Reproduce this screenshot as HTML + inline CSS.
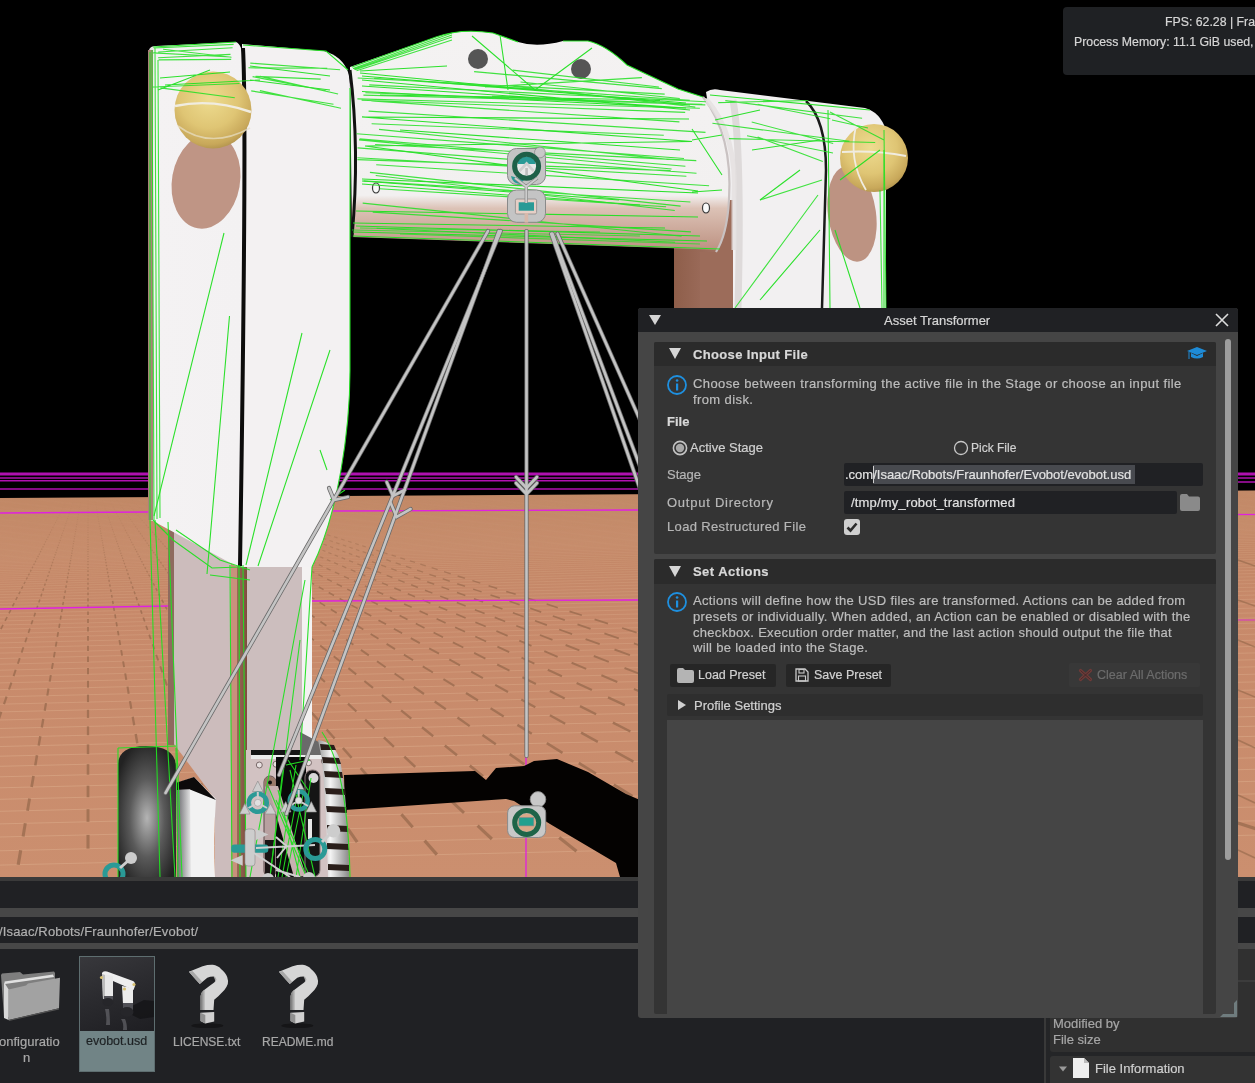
<!DOCTYPE html>
<html><head><meta charset="utf-8">
<style>
*{margin:0;padding:0;box-sizing:border-box}
html,body{width:1255px;height:1083px;overflow:hidden;background:#000;font-family:"Liberation Sans",sans-serif}
.a{position:absolute}
.t{position:absolute;white-space:nowrap;line-height:1;will-change:transform;-webkit-text-stroke-width:0.2px}
</style></head><body>
<svg class="a" style="left:0;top:0" width="1255" height="877" viewBox="0 0 1255 877">
<rect x="0" y="0" width="1255" height="877" fill="#000"/>
<defs><linearGradient id="floorG" gradientUnits="userSpaceOnUse" x1="0" y1="490" x2="0" y2="877"><stop offset="0" stop-color="#bf8563"/><stop offset="0.3" stop-color="#c7896a"/><stop offset="1" stop-color="#cb8f6f"/></linearGradient></defs><path d="M0 498 L1255 490.5 L1255 877 L0 877 Z" fill="url(#floorG)"/>
<!-- SCENE -->
<defs>
<linearGradient id="beamG" x1="0" y1="0" x2="0" y2="1">
 <stop offset="0" stop-color="#f4f2f2"/><stop offset="0.75" stop-color="#f2f0f0"/><stop offset="0.81" stop-color="#dcc2b6"/><stop offset="1" stop-color="#bd9282"/>
</linearGradient>
<linearGradient id="legL" x1="0" y1="0" x2="1" y2="0">
 <stop offset="0" stop-color="#d8d2d2"/><stop offset="0.06" stop-color="#f4f2f3"/><stop offset="1" stop-color="#f3f1f2"/>
</linearGradient>
<linearGradient id="brownG" x1="0" y1="0" x2="1" y2="0">
 <stop offset="0" stop-color="#8e5e4a"/><stop offset="0.7" stop-color="#a07060"/><stop offset="1" stop-color="#c8a898"/>
</linearGradient>
<radialGradient id="ballG" cx="0.45" cy="0.35" r="0.7">
 <stop offset="0" stop-color="#eedc90"/><stop offset="0.55" stop-color="#dfc574"/><stop offset="0.85" stop-color="#c8a85a"/><stop offset="1" stop-color="#a88a48"/>
</radialGradient>
<radialGradient id="wheelG" cx="0.5" cy="0.55" r="0.6">
 <stop offset="0" stop-color="#b4b4b4"/><stop offset="0.5" stop-color="#5a5a5a"/><stop offset="1" stop-color="#222"/>
</radialGradient>
<linearGradient id="lowG" x1="0" y1="0" x2="0" y2="1">
 <stop offset="0" stop-color="#c8bcbc"/><stop offset="1" stop-color="#cbbdbd"/>
</linearGradient>
<linearGradient id="grayL" x1="0" y1="0" x2="1" y2="0"><stop offset="0" stop-color="#6a6a6e"/><stop offset="1" stop-color="#e8e8e8"/></linearGradient>
<linearGradient id="trackG" x1="0" y1="0" x2="1" y2="0"><stop offset="0" stop-color="#9a9a9a"/><stop offset="0.4" stop-color="#f4f4f4"/><stop offset="1" stop-color="#8a8a8a"/></linearGradient>
<linearGradient id="brownV" x1="0" y1="0" x2="1" y2="0"><stop offset="0" stop-color="#9a6a58"/><stop offset="1" stop-color="#7a4a3a"/></linearGradient>
</defs>
<!-- floor grid texture -->
<clipPath id="floorClip"><path d="M0 498 L1255 490.5 L1255 877 L0 877 Z"/></clipPath>
<g stroke="#8c6246" stroke-width="1.2" opacity="0.6" fill="none" clip-path="url(#floorClip)">
<line x1="0" y1="499.2" x2="1255" y2="469.2" stroke="#e2b896" stroke-width="1" opacity="0.15"/>
<line x1="0" y1="500.4" x2="1255" y2="470.4" stroke="#e2b896" stroke-width="1" opacity="0.16"/>
<line x1="0" y1="501.6" x2="1255" y2="471.6" stroke="#e2b896" stroke-width="1" opacity="0.16"/>
<line x1="0" y1="502.8" x2="1255" y2="472.8" stroke="#e2b896" stroke-width="1" opacity="0.16"/>
<line x1="0" y1="504.0" x2="1255" y2="474.0" stroke="#e2b896" stroke-width="1" opacity="0.16"/>
<line x1="0" y1="505.2" x2="1255" y2="475.2" stroke="#e2b896" stroke-width="1" opacity="0.17"/>
<line x1="0" y1="506.4" x2="1255" y2="476.4" stroke="#e2b896" stroke-width="1" opacity="0.17"/>
<line x1="0" y1="507.6" x2="1255" y2="477.6" stroke="#e2b896" stroke-width="1" opacity="0.17"/>
<line x1="0" y1="508.8" x2="1255" y2="478.8" stroke="#e2b896" stroke-width="1" opacity="0.17"/>
<line x1="0" y1="510.0" x2="1255" y2="480.0" stroke="#e2b896" stroke-width="1" opacity="0.18"/>
<line x1="0" y1="511.2" x2="1255" y2="481.2" stroke="#e2b896" stroke-width="1" opacity="0.18"/>
<line x1="0" y1="512.4" x2="1255" y2="482.4" stroke="#e2b896" stroke-width="1" opacity="0.18"/>
<line x1="0" y1="513.6" x2="1255" y2="483.6" stroke="#e2b896" stroke-width="1" opacity="0.18"/>
<line x1="0" y1="514.8" x2="1255" y2="484.8" stroke="#e2b896" stroke-width="1" opacity="0.19"/>
<line x1="0" y1="516.0" x2="1255" y2="486.0" stroke="#e2b896" stroke-width="1" opacity="0.19"/>
<line x1="0" y1="517.2" x2="1255" y2="487.2" stroke="#e2b896" stroke-width="1" opacity="0.19"/>
<line x1="0" y1="518.4" x2="1255" y2="488.4" stroke="#e2b896" stroke-width="1" opacity="0.19"/>
<line x1="0" y1="519.6" x2="1255" y2="489.6" stroke="#e2b896" stroke-width="1" opacity="0.20"/>
<line x1="0" y1="520.8" x2="1255" y2="490.8" stroke="#e2b896" stroke-width="1" opacity="0.20"/>
<line x1="0" y1="522.0" x2="1255" y2="492.0" stroke="#e2b896" stroke-width="1" opacity="0.20"/>
<line x1="0" y1="523.2" x2="1255" y2="493.2" stroke="#e2b896" stroke-width="1" opacity="0.20"/>
<line x1="0" y1="524.4" x2="1255" y2="494.4" stroke="#e2b896" stroke-width="1" opacity="0.20"/>
<line x1="0" y1="525.6" x2="1255" y2="495.6" stroke="#e2b896" stroke-width="1" opacity="0.21"/>
<line x1="0" y1="526.8" x2="1255" y2="496.8" stroke="#e2b896" stroke-width="1" opacity="0.21"/>
<line x1="0" y1="528.0" x2="1255" y2="498.0" stroke="#e2b896" stroke-width="1" opacity="0.21"/>
<line x1="0" y1="529.2" x2="1255" y2="499.2" stroke="#e2b896" stroke-width="1" opacity="0.21"/>
<line x1="0" y1="530.4" x2="1255" y2="500.4" stroke="#e2b896" stroke-width="1" opacity="0.22"/>
<line x1="0" y1="531.6" x2="1255" y2="501.6" stroke="#e2b896" stroke-width="1" opacity="0.22"/>
<line x1="0" y1="532.8" x2="1255" y2="502.8" stroke="#e2b896" stroke-width="1" opacity="0.22"/>
<line x1="0" y1="534.0" x2="1255" y2="504.0" stroke="#e2b896" stroke-width="1" opacity="0.22"/>
<line x1="0" y1="535.2" x2="1255" y2="505.2" stroke="#e2b896" stroke-width="1" opacity="0.23"/>
<line x1="0" y1="536.4" x2="1255" y2="506.4" stroke="#e2b896" stroke-width="1" opacity="0.23"/>
<line x1="0" y1="537.6" x2="1255" y2="507.6" stroke="#e2b896" stroke-width="1" opacity="0.23"/>
<line x1="0" y1="538.8" x2="1255" y2="508.8" stroke="#e2b896" stroke-width="1" opacity="0.23"/>
<line x1="0" y1="540.0" x2="1255" y2="510.0" stroke="#e2b896" stroke-width="1" opacity="0.24"/>
<line x1="0" y1="541.2" x2="1255" y2="511.2" stroke="#e2b896" stroke-width="1" opacity="0.24"/>
<line x1="0" y1="542.4" x2="1255" y2="512.4" stroke="#e2b896" stroke-width="1" opacity="0.24"/>
<line x1="0" y1="543.6" x2="1255" y2="513.6" stroke="#e2b896" stroke-width="1" opacity="0.24"/>
<line x1="0" y1="544.8" x2="1255" y2="514.8" stroke="#e2b896" stroke-width="1" opacity="0.25"/>
<line x1="0" y1="546.0" x2="1255" y2="516.0" stroke="#e2b896" stroke-width="1" opacity="0.25"/>
<line x1="0" y1="547.2" x2="1255" y2="517.2" stroke="#e2b896" stroke-width="1" opacity="0.25"/>
<line x1="0" y1="548.4" x2="1255" y2="518.4" stroke="#e2b896" stroke-width="1" opacity="0.25"/>
<line x1="0" y1="549.6" x2="1255" y2="519.6" stroke="#e2b896" stroke-width="1" opacity="0.26"/>
<line x1="0" y1="550.8" x2="1255" y2="520.8" stroke="#e2b896" stroke-width="1" opacity="0.26"/>
<line x1="0" y1="552.0" x2="1255" y2="522.0" stroke="#e2b896" stroke-width="1" opacity="0.26"/>
<line x1="0" y1="553.2" x2="1255" y2="523.2" stroke="#e2b896" stroke-width="1" opacity="0.26"/>
<line x1="0" y1="554.4" x2="1255" y2="524.4" stroke="#e2b896" stroke-width="1" opacity="0.26"/>
<line x1="0" y1="555.6" x2="1255" y2="525.6" stroke="#e2b896" stroke-width="1" opacity="0.27"/>
<line x1="0" y1="556.8" x2="1255" y2="526.8" stroke="#e2b896" stroke-width="1" opacity="0.27"/>
<line x1="0" y1="558.0" x2="1255" y2="528.0" stroke="#e2b896" stroke-width="1" opacity="0.27"/>
<line x1="0" y1="559.2" x2="1255" y2="529.2" stroke="#e2b896" stroke-width="1" opacity="0.27"/>
<line x1="0" y1="560.4" x2="1255" y2="530.4" stroke="#e2b896" stroke-width="1" opacity="0.28"/>
<line x1="0" y1="561.7" x2="1255" y2="531.7" stroke="#e2b896" stroke-width="1" opacity="0.28"/>
<line x1="0" y1="563.0" x2="1255" y2="533.0" stroke="#e2b896" stroke-width="1" opacity="0.28"/>
<line x1="0" y1="564.4" x2="1255" y2="534.4" stroke="#e2b896" stroke-width="1" opacity="0.28"/>
<line x1="0" y1="565.9" x2="1255" y2="535.9" stroke="#e2b896" stroke-width="1" opacity="0.29"/>
<line x1="0" y1="567.4" x2="1255" y2="537.4" stroke="#e2b896" stroke-width="1" opacity="0.29"/>
<line x1="0" y1="569.0" x2="1255" y2="539.0" stroke="#e2b896" stroke-width="1" opacity="0.29"/>
<line x1="0" y1="570.6" x2="1255" y2="540.6" stroke="#e2b896" stroke-width="1" opacity="0.30"/>
<line x1="0" y1="572.4" x2="1255" y2="542.4" stroke="#e2b896" stroke-width="1" opacity="0.30"/>
<line x1="0" y1="574.2" x2="1255" y2="544.2" stroke="#e2b896" stroke-width="1" opacity="0.30"/>
<line x1="0" y1="576.1" x2="1255" y2="546.1" stroke="#e2b896" stroke-width="1" opacity="0.31"/>
<line x1="0" y1="578.1" x2="1255" y2="548.1" stroke="#e2b896" stroke-width="1" opacity="0.31"/>
<line x1="0" y1="580.1" x2="1255" y2="550.1" stroke="#e2b896" stroke-width="1" opacity="0.32"/>
<line x1="0" y1="582.3" x2="1255" y2="552.3" stroke="#e2b896" stroke-width="1" opacity="0.32"/>
<line x1="0" y1="584.5" x2="1255" y2="554.5" stroke="#e2b896" stroke-width="1" opacity="0.33"/>
<line x1="0" y1="586.9" x2="1255" y2="556.9" stroke="#e2b896" stroke-width="1" opacity="0.33"/>
<line x1="0" y1="589.4" x2="1255" y2="559.4" stroke="#e2b896" stroke-width="1" opacity="0.33"/>
<line x1="0" y1="591.9" x2="1255" y2="561.9" stroke="#e2b896" stroke-width="1" opacity="0.34"/>
<line x1="0" y1="594.6" x2="1255" y2="564.6" stroke="#e2b896" stroke-width="1" opacity="0.35"/>
<line x1="0" y1="597.4" x2="1255" y2="567.4" stroke="#e2b896" stroke-width="1" opacity="0.35"/>
<line x1="0" y1="600.4" x2="1255" y2="570.4" stroke="#e2b896" stroke-width="1" opacity="0.36"/>
<line x1="0" y1="603.5" x2="1255" y2="573.5" stroke="#e2b896" stroke-width="1" opacity="0.36"/>
<line x1="0" y1="606.7" x2="1255" y2="576.7" stroke="#e2b896" stroke-width="1" opacity="0.37"/>
<line x1="0" y1="610.0" x2="1255" y2="580.0" stroke="#e2b896" stroke-width="1" opacity="0.38"/>
<line x1="0" y1="613.5" x2="1255" y2="583.5" stroke="#e2b896" stroke-width="1" opacity="0.38"/>
<line x1="0" y1="617.2" x2="1255" y2="587.2" stroke="#e2b896" stroke-width="1" opacity="0.39"/>
<line x1="0" y1="621.0" x2="1255" y2="591.0" stroke="#e2b896" stroke-width="1" opacity="0.40"/>
<line x1="0" y1="625.0" x2="1255" y2="595.0" stroke="#e2b896" stroke-width="1" opacity="0.41"/>
<line x1="0" y1="629.2" x2="1255" y2="599.2" stroke="#e2b896" stroke-width="1" opacity="0.41"/>
<line x1="0" y1="633.6" x2="1255" y2="603.6" stroke="#e2b896" stroke-width="1" opacity="0.42"/>
<line x1="0" y1="638.1" x2="1255" y2="608.1" stroke="#e2b896" stroke-width="1" opacity="0.43"/>
<line x1="0" y1="642.9" x2="1255" y2="612.9" stroke="#e2b896" stroke-width="1" opacity="0.44"/>
<line x1="0" y1="647.9" x2="1255" y2="617.9" stroke="#e2b896" stroke-width="1" opacity="0.45"/>
<line x1="0" y1="653.1" x2="1255" y2="623.1" stroke="#e2b896" stroke-width="1" opacity="0.46"/>
<line x1="0" y1="658.5" x2="1255" y2="628.5" stroke="#e2b896" stroke-width="1" opacity="0.47"/>
<line x1="0" y1="664.2" x2="1255" y2="634.2" stroke="#e2b896" stroke-width="1" opacity="0.48"/>
<line x1="0" y1="670.2" x2="1255" y2="640.2" stroke="#e2b896" stroke-width="1" opacity="0.50"/>
<line x1="0" y1="676.4" x2="1255" y2="646.4" stroke="#e2b896" stroke-width="1" opacity="0.51"/>
<line x1="0" y1="682.9" x2="1255" y2="652.9" stroke="#e2b896" stroke-width="1" opacity="0.52"/>
<line x1="0" y1="689.7" x2="1255" y2="659.7" stroke="#e2b896" stroke-width="1" opacity="0.54"/>
<line x1="0" y1="696.8" x2="1255" y2="666.8" stroke="#e2b896" stroke-width="1" opacity="0.55"/>
<line x1="0" y1="704.2" x2="1255" y2="674.2" stroke="#e2b896" stroke-width="1" opacity="0.56"/>
<line x1="0" y1="711.9" x2="1255" y2="681.9" stroke="#e2b896" stroke-width="1" opacity="0.58"/>
<line x1="0" y1="720.0" x2="1255" y2="690.0" stroke="#e2b896" stroke-width="1" opacity="0.60"/>
<line x1="0" y1="728.5" x2="1255" y2="698.5" stroke="#e2b896" stroke-width="1" opacity="0.61"/>
<line x1="0" y1="737.3" x2="1255" y2="707.3" stroke="#e2b896" stroke-width="1" opacity="0.63"/>
<line x1="0" y1="746.5" x2="1255" y2="716.5" stroke="#e2b896" stroke-width="1" opacity="0.65"/>
<line x1="0" y1="756.2" x2="1255" y2="726.2" stroke="#e2b896" stroke-width="1" opacity="0.65"/>
<line x1="0" y1="766.3" x2="1255" y2="736.3" stroke="#e2b896" stroke-width="1" opacity="0.65"/>
<line x1="0" y1="776.8" x2="1255" y2="746.8" stroke="#e2b896" stroke-width="1" opacity="0.65"/>
<line x1="0" y1="787.8" x2="1255" y2="757.8" stroke="#e2b896" stroke-width="1" opacity="0.65"/>
<line x1="0" y1="799.3" x2="1255" y2="769.3" stroke="#e2b896" stroke-width="1" opacity="0.65"/>
<line x1="0" y1="811.3" x2="1255" y2="781.3" stroke="#e2b896" stroke-width="1" opacity="0.65"/>
<line x1="0" y1="823.9" x2="1255" y2="793.9" stroke="#e2b896" stroke-width="1" opacity="0.65"/>
<line x1="0" y1="837.0" x2="1255" y2="807.0" stroke="#e2b896" stroke-width="1" opacity="0.65"/>
<line x1="0" y1="850.8" x2="1255" y2="820.8" stroke="#e2b896" stroke-width="1" opacity="0.65"/>
<line x1="0" y1="865.1" x2="1255" y2="835.1" stroke="#e2b896" stroke-width="1" opacity="0.65"/>
<line x1="65.7" y1="502.4" x2="65.1" y2="503.6" stroke-width="0.85" stroke-opacity="0.06"/>
<line x1="64.5" y1="504.9" x2="63.9" y2="506.1" stroke-width="0.86" stroke-opacity="0.09"/>
<line x1="63.2" y1="507.3" x2="62.6" y2="508.5" stroke-width="0.88" stroke-opacity="0.11"/>
<line x1="62.0" y1="509.7" x2="61.4" y2="510.9" stroke-width="0.90" stroke-opacity="0.13"/>
<line x1="60.7" y1="512.1" x2="60.1" y2="513.4" stroke-width="0.91" stroke-opacity="0.15"/>
<line x1="59.5" y1="514.6" x2="58.9" y2="515.8" stroke-width="0.93" stroke-opacity="0.17"/>
<line x1="58.3" y1="517.0" x2="57.6" y2="518.2" stroke-width="0.95" stroke-opacity="0.19"/>
<line x1="57.0" y1="519.4" x2="56.4" y2="520.7" stroke-width="0.96" stroke-opacity="0.22"/>
<line x1="55.8" y1="521.9" x2="55.2" y2="523.1" stroke-width="0.98" stroke-opacity="0.24"/>
<line x1="54.5" y1="524.3" x2="53.9" y2="525.5" stroke-width="1.00" stroke-opacity="0.26"/>
<line x1="53.3" y1="526.7" x2="52.7" y2="527.9" stroke-width="1.01" stroke-opacity="0.28"/>
<line x1="52.0" y1="529.2" x2="51.4" y2="530.4" stroke-width="1.03" stroke-opacity="0.30"/>
<line x1="50.8" y1="531.6" x2="50.2" y2="532.8" stroke-width="1.04" stroke-opacity="0.33"/>
<line x1="49.6" y1="534.0" x2="48.9" y2="535.2" stroke-width="1.06" stroke-opacity="0.35"/>
<line x1="48.3" y1="536.4" x2="47.7" y2="537.7" stroke-width="1.08" stroke-opacity="0.37"/>
<line x1="47.1" y1="538.9" x2="46.4" y2="540.1" stroke-width="1.09" stroke-opacity="0.39"/>
<line x1="45.8" y1="541.3" x2="45.2" y2="542.5" stroke-width="1.11" stroke-opacity="0.41"/>
<line x1="44.6" y1="543.7" x2="44.0" y2="544.9" stroke-width="1.13" stroke-opacity="0.43"/>
<line x1="43.3" y1="546.2" x2="42.7" y2="547.4" stroke-width="1.14" stroke-opacity="0.46"/>
<line x1="42.1" y1="548.6" x2="41.5" y2="549.8" stroke-width="1.16" stroke-opacity="0.48"/>
<line x1="40.9" y1="551.0" x2="40.2" y2="552.2" stroke-width="1.18" stroke-opacity="0.50"/>
<line x1="39.6" y1="553.5" x2="39.0" y2="554.7" stroke-width="1.19" stroke-opacity="0.52"/>
<line x1="38.4" y1="555.9" x2="37.7" y2="557.1" stroke-width="1.21" stroke-opacity="0.54"/>
<line x1="37.1" y1="558.3" x2="36.5" y2="559.5" stroke-width="1.23" stroke-opacity="0.57"/>
<line x1="35.8" y1="560.8" x2="35.1" y2="562.2" stroke-width="1.24" stroke-opacity="0.59"/>
<line x1="34.4" y1="563.6" x2="33.7" y2="565.1" stroke-width="1.26" stroke-opacity="0.61"/>
<line x1="32.9" y1="566.6" x2="32.1" y2="568.2" stroke-width="1.28" stroke-opacity="0.64"/>
<line x1="31.2" y1="569.9" x2="30.3" y2="571.6" stroke-width="1.30" stroke-opacity="0.67"/>
<line x1="29.4" y1="573.5" x2="28.4" y2="575.4" stroke-width="1.33" stroke-opacity="0.70"/>
<line x1="27.4" y1="577.4" x2="26.3" y2="579.5" stroke-width="1.35" stroke-opacity="0.74"/>
<line x1="25.2" y1="581.7" x2="24.0" y2="584.0" stroke-width="1.38" stroke-opacity="0.78"/>
<line x1="22.8" y1="586.4" x2="21.5" y2="588.8" stroke-width="1.42" stroke-opacity="0.82"/>
<line x1="20.2" y1="591.5" x2="18.8" y2="594.2" stroke-width="1.45" stroke-opacity="0.86"/>
<line x1="17.3" y1="597.0" x2="15.8" y2="600.0" stroke-width="1.49" stroke-opacity="0.91"/>
<line x1="14.2" y1="603.1" x2="12.5" y2="606.4" stroke-width="1.53" stroke-opacity="0.97"/>
<line x1="10.8" y1="609.8" x2="9.0" y2="613.3" stroke-width="1.57" stroke-opacity="1.00"/>
<line x1="7.1" y1="617.0" x2="5.1" y2="620.9" stroke-width="1.62" stroke-opacity="1.00"/>
<line x1="3.0" y1="624.9" x2="0.9" y2="629.2" stroke-width="1.68" stroke-opacity="1.00"/>
<line x1="73.6" y1="501.0" x2="73.1" y2="502.3" stroke-width="0.84" stroke-opacity="0.05"/>
<line x1="72.7" y1="503.5" x2="72.3" y2="504.7" stroke-width="0.86" stroke-opacity="0.07"/>
<line x1="71.9" y1="505.9" x2="71.5" y2="507.1" stroke-width="0.87" stroke-opacity="0.10"/>
<line x1="71.1" y1="508.3" x2="70.7" y2="509.5" stroke-width="0.89" stroke-opacity="0.12"/>
<line x1="70.2" y1="510.7" x2="69.8" y2="511.9" stroke-width="0.91" stroke-opacity="0.14"/>
<line x1="69.4" y1="513.1" x2="69.0" y2="514.4" stroke-width="0.92" stroke-opacity="0.16"/>
<line x1="68.6" y1="515.6" x2="68.2" y2="516.8" stroke-width="0.94" stroke-opacity="0.18"/>
<line x1="67.8" y1="518.0" x2="67.3" y2="519.2" stroke-width="0.95" stroke-opacity="0.21"/>
<line x1="66.9" y1="520.4" x2="66.5" y2="521.6" stroke-width="0.97" stroke-opacity="0.23"/>
<line x1="66.1" y1="522.8" x2="65.7" y2="524.0" stroke-width="0.99" stroke-opacity="0.25"/>
<line x1="65.3" y1="525.2" x2="64.9" y2="526.4" stroke-width="1.00" stroke-opacity="0.27"/>
<line x1="64.4" y1="527.7" x2="64.0" y2="528.9" stroke-width="1.02" stroke-opacity="0.29"/>
<line x1="63.6" y1="530.1" x2="63.2" y2="531.3" stroke-width="1.04" stroke-opacity="0.31"/>
<line x1="62.8" y1="532.5" x2="62.4" y2="533.7" stroke-width="1.05" stroke-opacity="0.34"/>
<line x1="62.0" y1="534.9" x2="61.5" y2="536.1" stroke-width="1.07" stroke-opacity="0.36"/>
<line x1="61.1" y1="537.3" x2="60.7" y2="538.5" stroke-width="1.09" stroke-opacity="0.38"/>
<line x1="60.3" y1="539.8" x2="59.9" y2="541.0" stroke-width="1.10" stroke-opacity="0.40"/>
<line x1="59.5" y1="542.2" x2="59.1" y2="543.4" stroke-width="1.12" stroke-opacity="0.42"/>
<line x1="58.6" y1="544.6" x2="58.2" y2="545.8" stroke-width="1.14" stroke-opacity="0.45"/>
<line x1="57.8" y1="547.0" x2="57.4" y2="548.2" stroke-width="1.15" stroke-opacity="0.47"/>
<line x1="57.0" y1="549.4" x2="56.6" y2="550.6" stroke-width="1.17" stroke-opacity="0.49"/>
<line x1="56.2" y1="551.9" x2="55.7" y2="553.1" stroke-width="1.18" stroke-opacity="0.51"/>
<line x1="55.3" y1="554.3" x2="54.9" y2="555.5" stroke-width="1.20" stroke-opacity="0.53"/>
<line x1="54.5" y1="556.7" x2="54.1" y2="557.9" stroke-width="1.22" stroke-opacity="0.55"/>
<line x1="53.7" y1="559.1" x2="53.2" y2="560.4" stroke-width="1.23" stroke-opacity="0.58"/>
<line x1="52.8" y1="561.8" x2="52.3" y2="563.2" stroke-width="1.25" stroke-opacity="0.60"/>
<line x1="51.8" y1="564.6" x2="51.3" y2="566.2" stroke-width="1.27" stroke-opacity="0.63"/>
<line x1="50.7" y1="567.8" x2="50.1" y2="569.4" stroke-width="1.29" stroke-opacity="0.65"/>
<line x1="49.5" y1="571.2" x2="48.9" y2="573.0" stroke-width="1.32" stroke-opacity="0.69"/>
<line x1="48.3" y1="574.9" x2="47.6" y2="576.9" stroke-width="1.34" stroke-opacity="0.72"/>
<line x1="46.9" y1="579.0" x2="46.1" y2="581.2" stroke-width="1.37" stroke-opacity="0.76"/>
<line x1="45.3" y1="583.5" x2="44.5" y2="585.8" stroke-width="1.40" stroke-opacity="0.80"/>
<line x1="43.7" y1="588.3" x2="42.8" y2="590.9" stroke-width="1.43" stroke-opacity="0.84"/>
<line x1="41.8" y1="593.6" x2="40.9" y2="596.5" stroke-width="1.47" stroke-opacity="0.89"/>
<line x1="39.9" y1="599.4" x2="38.8" y2="602.5" stroke-width="1.51" stroke-opacity="0.94"/>
<line x1="37.7" y1="605.8" x2="36.5" y2="609.1" stroke-width="1.55" stroke-opacity="1.00"/>
<line x1="35.3" y1="612.7" x2="34.1" y2="616.4" stroke-width="1.60" stroke-opacity="1.00"/>
<line x1="32.7" y1="620.2" x2="31.3" y2="624.3" stroke-width="1.65" stroke-opacity="1.00"/>
<line x1="29.9" y1="628.5" x2="28.4" y2="632.9" stroke-width="1.70" stroke-opacity="1.00"/>
<line x1="26.8" y1="637.5" x2="25.2" y2="642.3" stroke-width="1.77" stroke-opacity="1.00"/>
<line x1="23.4" y1="647.3" x2="21.6" y2="652.6" stroke-width="1.83" stroke-opacity="1.00"/>
<line x1="19.8" y1="658.1" x2="17.8" y2="663.8" stroke-width="1.91" stroke-opacity="1.00"/>
<line x1="15.7" y1="669.8" x2="13.6" y2="676.1" stroke-width="1.98" stroke-opacity="1.00"/>
<line x1="11.4" y1="682.6" x2="9.0" y2="689.5" stroke-width="2.07" stroke-opacity="1.00"/>
<line x1="6.6" y1="696.6" x2="4.0" y2="704.1" stroke-width="2.17" stroke-opacity="1.00"/>
<line x1="1.3" y1="711.9" x2="-1.5" y2="720.0" stroke-width="2.27" stroke-opacity="1.00"/>
<line x1="80.6" y1="502.1" x2="80.4" y2="503.3" stroke-width="0.85" stroke-opacity="0.06"/>
<line x1="80.2" y1="504.5" x2="80.0" y2="505.7" stroke-width="0.86" stroke-opacity="0.09"/>
<line x1="79.7" y1="506.9" x2="79.5" y2="508.1" stroke-width="0.88" stroke-opacity="0.11"/>
<line x1="79.3" y1="509.3" x2="79.1" y2="510.5" stroke-width="0.90" stroke-opacity="0.13"/>
<line x1="78.9" y1="511.7" x2="78.7" y2="512.9" stroke-width="0.91" stroke-opacity="0.15"/>
<line x1="78.5" y1="514.1" x2="78.3" y2="515.3" stroke-width="0.93" stroke-opacity="0.17"/>
<line x1="78.1" y1="516.5" x2="77.9" y2="517.7" stroke-width="0.95" stroke-opacity="0.19"/>
<line x1="77.7" y1="518.9" x2="77.5" y2="520.1" stroke-width="0.96" stroke-opacity="0.22"/>
<line x1="77.3" y1="521.4" x2="77.1" y2="522.6" stroke-width="0.98" stroke-opacity="0.24"/>
<line x1="76.8" y1="523.8" x2="76.6" y2="525.0" stroke-width="1.00" stroke-opacity="0.26"/>
<line x1="76.4" y1="526.2" x2="76.2" y2="527.4" stroke-width="1.01" stroke-opacity="0.28"/>
<line x1="76.0" y1="528.6" x2="75.8" y2="529.8" stroke-width="1.03" stroke-opacity="0.30"/>
<line x1="75.6" y1="531.0" x2="75.4" y2="532.2" stroke-width="1.04" stroke-opacity="0.33"/>
<line x1="75.2" y1="533.4" x2="75.0" y2="534.6" stroke-width="1.06" stroke-opacity="0.35"/>
<line x1="74.8" y1="535.8" x2="74.6" y2="537.0" stroke-width="1.08" stroke-opacity="0.37"/>
<line x1="74.4" y1="538.2" x2="74.1" y2="539.4" stroke-width="1.09" stroke-opacity="0.39"/>
<line x1="73.9" y1="540.6" x2="73.7" y2="541.8" stroke-width="1.11" stroke-opacity="0.41"/>
<line x1="73.5" y1="543.0" x2="73.3" y2="544.2" stroke-width="1.13" stroke-opacity="0.43"/>
<line x1="73.1" y1="545.5" x2="72.9" y2="546.7" stroke-width="1.14" stroke-opacity="0.46"/>
<line x1="72.7" y1="547.9" x2="72.5" y2="549.1" stroke-width="1.16" stroke-opacity="0.48"/>
<line x1="72.3" y1="550.3" x2="72.1" y2="551.5" stroke-width="1.18" stroke-opacity="0.50"/>
<line x1="71.9" y1="552.7" x2="71.7" y2="553.9" stroke-width="1.19" stroke-opacity="0.52"/>
<line x1="71.5" y1="555.1" x2="71.2" y2="556.3" stroke-width="1.21" stroke-opacity="0.54"/>
<line x1="71.0" y1="557.5" x2="70.8" y2="558.7" stroke-width="1.23" stroke-opacity="0.57"/>
<line x1="70.6" y1="560.0" x2="70.4" y2="561.3" stroke-width="1.24" stroke-opacity="0.59"/>
<line x1="70.1" y1="562.7" x2="69.9" y2="564.2" stroke-width="1.26" stroke-opacity="0.61"/>
<line x1="69.6" y1="565.7" x2="69.4" y2="567.3" stroke-width="1.28" stroke-opacity="0.64"/>
<line x1="69.1" y1="569.0" x2="68.8" y2="570.7" stroke-width="1.30" stroke-opacity="0.67"/>
<line x1="68.5" y1="572.5" x2="68.1" y2="574.4" stroke-width="1.33" stroke-opacity="0.70"/>
<line x1="67.8" y1="576.4" x2="67.4" y2="578.5" stroke-width="1.35" stroke-opacity="0.74"/>
<line x1="67.1" y1="580.7" x2="66.7" y2="582.9" stroke-width="1.38" stroke-opacity="0.78"/>
<line x1="66.3" y1="585.3" x2="65.8" y2="587.8" stroke-width="1.42" stroke-opacity="0.82"/>
<line x1="65.4" y1="590.4" x2="64.9" y2="593.1" stroke-width="1.45" stroke-opacity="0.86"/>
<line x1="64.4" y1="595.9" x2="63.9" y2="598.9" stroke-width="1.49" stroke-opacity="0.91"/>
<line x1="63.4" y1="601.9" x2="62.8" y2="605.2" stroke-width="1.53" stroke-opacity="0.97"/>
<line x1="62.3" y1="608.5" x2="61.7" y2="612.1" stroke-width="1.57" stroke-opacity="1.00"/>
<line x1="61.0" y1="615.7" x2="60.4" y2="619.6" stroke-width="1.62" stroke-opacity="1.00"/>
<line x1="59.7" y1="623.6" x2="59.0" y2="627.8" stroke-width="1.68" stroke-opacity="1.00"/>
<line x1="58.2" y1="632.2" x2="57.4" y2="636.8" stroke-width="1.73" stroke-opacity="1.00"/>
<line x1="56.6" y1="641.6" x2="55.7" y2="646.6" stroke-width="1.80" stroke-opacity="1.00"/>
<line x1="54.8" y1="651.8" x2="53.9" y2="657.3" stroke-width="1.87" stroke-opacity="1.00"/>
<line x1="52.9" y1="663.0" x2="51.9" y2="668.9" stroke-width="1.94" stroke-opacity="1.00"/>
<line x1="50.8" y1="675.2" x2="49.7" y2="681.7" stroke-width="2.03" stroke-opacity="1.00"/>
<line x1="48.5" y1="688.5" x2="47.3" y2="695.6" stroke-width="2.12" stroke-opacity="1.00"/>
<line x1="46.0" y1="703.1" x2="44.7" y2="710.8" stroke-width="2.22" stroke-opacity="1.00"/>
<line x1="43.3" y1="719.0" x2="41.8" y2="727.5" stroke-width="2.33" stroke-opacity="1.00"/>
<line x1="40.3" y1="736.3" x2="38.7" y2="745.6" stroke-width="2.44" stroke-opacity="1.00"/>
<line x1="37.0" y1="755.3" x2="35.3" y2="765.4" stroke-width="2.57" stroke-opacity="1.00"/>
<line x1="33.5" y1="776.0" x2="31.6" y2="787.1" stroke-width="2.71" stroke-opacity="1.00"/>
<line x1="29.6" y1="798.6" x2="27.5" y2="810.7" stroke-width="2.87" stroke-opacity="1.00"/>
<line x1="25.3" y1="823.3" x2="23.1" y2="836.5" stroke-width="3.04" stroke-opacity="1.00"/>
<line x1="20.7" y1="850.3" x2="18.2" y2="864.7" stroke-width="3.22" stroke-opacity="1.00"/>
<line x1="88.0" y1="500.7" x2="88.0" y2="501.9" stroke-width="0.84" stroke-opacity="0.05"/>
<line x1="88.0" y1="503.1" x2="88.0" y2="504.3" stroke-width="0.86" stroke-opacity="0.07"/>
<line x1="88.0" y1="505.5" x2="88.0" y2="506.7" stroke-width="0.87" stroke-opacity="0.10"/>
<line x1="88.0" y1="507.9" x2="88.0" y2="509.1" stroke-width="0.89" stroke-opacity="0.12"/>
<line x1="88.0" y1="510.3" x2="88.0" y2="511.5" stroke-width="0.91" stroke-opacity="0.14"/>
<line x1="88.0" y1="512.7" x2="88.0" y2="513.9" stroke-width="0.92" stroke-opacity="0.16"/>
<line x1="88.0" y1="515.1" x2="88.0" y2="516.3" stroke-width="0.94" stroke-opacity="0.18"/>
<line x1="88.0" y1="517.5" x2="88.0" y2="518.7" stroke-width="0.95" stroke-opacity="0.21"/>
<line x1="88.0" y1="519.9" x2="88.0" y2="521.1" stroke-width="0.97" stroke-opacity="0.23"/>
<line x1="88.0" y1="522.3" x2="88.0" y2="523.5" stroke-width="0.99" stroke-opacity="0.25"/>
<line x1="88.0" y1="524.7" x2="88.0" y2="525.9" stroke-width="1.00" stroke-opacity="0.27"/>
<line x1="88.0" y1="527.1" x2="88.0" y2="528.3" stroke-width="1.02" stroke-opacity="0.29"/>
<line x1="88.0" y1="529.5" x2="88.0" y2="530.7" stroke-width="1.04" stroke-opacity="0.31"/>
<line x1="88.0" y1="531.9" x2="88.0" y2="533.1" stroke-width="1.05" stroke-opacity="0.34"/>
<line x1="88.0" y1="534.3" x2="88.0" y2="535.5" stroke-width="1.07" stroke-opacity="0.36"/>
<line x1="88.0" y1="536.7" x2="88.0" y2="537.9" stroke-width="1.09" stroke-opacity="0.38"/>
<line x1="88.0" y1="539.1" x2="88.0" y2="540.3" stroke-width="1.10" stroke-opacity="0.40"/>
<line x1="88.0" y1="541.5" x2="88.0" y2="542.7" stroke-width="1.12" stroke-opacity="0.42"/>
<line x1="88.0" y1="543.9" x2="88.0" y2="545.1" stroke-width="1.14" stroke-opacity="0.45"/>
<line x1="88.0" y1="546.3" x2="88.0" y2="547.5" stroke-width="1.15" stroke-opacity="0.47"/>
<line x1="88.0" y1="548.7" x2="88.0" y2="549.9" stroke-width="1.17" stroke-opacity="0.49"/>
<line x1="88.0" y1="551.1" x2="88.0" y2="552.3" stroke-width="1.18" stroke-opacity="0.51"/>
<line x1="88.0" y1="553.5" x2="88.0" y2="554.7" stroke-width="1.20" stroke-opacity="0.53"/>
<line x1="88.0" y1="555.9" x2="88.0" y2="557.1" stroke-width="1.22" stroke-opacity="0.55"/>
<line x1="88.0" y1="558.3" x2="88.0" y2="559.6" stroke-width="1.23" stroke-opacity="0.58"/>
<line x1="88.0" y1="560.9" x2="88.0" y2="562.3" stroke-width="1.25" stroke-opacity="0.60"/>
<line x1="88.0" y1="563.8" x2="88.0" y2="565.3" stroke-width="1.27" stroke-opacity="0.63"/>
<line x1="88.0" y1="566.9" x2="88.0" y2="568.5" stroke-width="1.29" stroke-opacity="0.65"/>
<line x1="88.0" y1="570.3" x2="88.0" y2="572.1" stroke-width="1.32" stroke-opacity="0.69"/>
<line x1="88.0" y1="574.0" x2="88.0" y2="575.9" stroke-width="1.34" stroke-opacity="0.72"/>
<line x1="88.0" y1="578.0" x2="88.0" y2="580.2" stroke-width="1.37" stroke-opacity="0.76"/>
<line x1="88.0" y1="582.4" x2="88.0" y2="584.8" stroke-width="1.40" stroke-opacity="0.80"/>
<line x1="88.0" y1="587.3" x2="88.0" y2="589.8" stroke-width="1.43" stroke-opacity="0.84"/>
<line x1="88.0" y1="592.5" x2="88.0" y2="595.3" stroke-width="1.47" stroke-opacity="0.89"/>
<line x1="88.0" y1="598.3" x2="88.0" y2="601.4" stroke-width="1.51" stroke-opacity="0.94"/>
<line x1="88.0" y1="604.6" x2="88.0" y2="607.9" stroke-width="1.55" stroke-opacity="1.00"/>
<line x1="88.0" y1="611.4" x2="88.0" y2="615.1" stroke-width="1.60" stroke-opacity="1.00"/>
<line x1="88.0" y1="618.9" x2="88.0" y2="622.9" stroke-width="1.65" stroke-opacity="1.00"/>
<line x1="88.0" y1="627.1" x2="88.0" y2="631.5" stroke-width="1.70" stroke-opacity="1.00"/>
<line x1="88.0" y1="636.0" x2="88.0" y2="640.8" stroke-width="1.77" stroke-opacity="1.00"/>
<line x1="88.0" y1="645.8" x2="88.0" y2="651.0" stroke-width="1.83" stroke-opacity="1.00"/>
<line x1="88.0" y1="656.4" x2="88.0" y2="662.1" stroke-width="1.91" stroke-opacity="1.00"/>
<line x1="88.0" y1="668.1" x2="88.0" y2="674.3" stroke-width="1.98" stroke-opacity="1.00"/>
<line x1="88.0" y1="680.8" x2="88.0" y2="687.6" stroke-width="2.07" stroke-opacity="1.00"/>
<line x1="88.0" y1="694.7" x2="88.0" y2="702.1" stroke-width="2.17" stroke-opacity="1.00"/>
<line x1="88.0" y1="709.8" x2="88.0" y2="717.9" stroke-width="2.27" stroke-opacity="1.00"/>
<line x1="88.0" y1="726.4" x2="88.0" y2="735.2" stroke-width="2.38" stroke-opacity="1.00"/>
<line x1="88.0" y1="744.4" x2="88.0" y2="754.1" stroke-width="2.51" stroke-opacity="1.00"/>
<line x1="88.0" y1="764.2" x2="88.0" y2="774.7" stroke-width="2.64" stroke-opacity="1.00"/>
<line x1="88.0" y1="785.7" x2="88.0" y2="797.2" stroke-width="2.79" stroke-opacity="1.00"/>
<line x1="88.0" y1="809.2" x2="88.0" y2="821.8" stroke-width="2.95" stroke-opacity="1.00"/>
<line x1="88.0" y1="834.9" x2="88.0" y2="848.6" stroke-width="3.13" stroke-opacity="1.00"/>
<line x1="95.4" y1="501.7" x2="95.6" y2="502.9" stroke-width="0.85" stroke-opacity="0.06"/>
<line x1="95.8" y1="504.1" x2="96.0" y2="505.3" stroke-width="0.86" stroke-opacity="0.09"/>
<line x1="96.3" y1="506.5" x2="96.5" y2="507.7" stroke-width="0.88" stroke-opacity="0.11"/>
<line x1="96.7" y1="508.9" x2="96.9" y2="510.1" stroke-width="0.90" stroke-opacity="0.13"/>
<line x1="97.1" y1="511.3" x2="97.3" y2="512.5" stroke-width="0.91" stroke-opacity="0.15"/>
<line x1="97.5" y1="513.7" x2="97.7" y2="514.9" stroke-width="0.93" stroke-opacity="0.17"/>
<line x1="97.9" y1="516.1" x2="98.1" y2="517.3" stroke-width="0.95" stroke-opacity="0.19"/>
<line x1="98.3" y1="518.4" x2="98.5" y2="519.6" stroke-width="0.96" stroke-opacity="0.22"/>
<line x1="98.7" y1="520.8" x2="98.9" y2="522.0" stroke-width="0.98" stroke-opacity="0.24"/>
<line x1="99.2" y1="523.2" x2="99.4" y2="524.4" stroke-width="1.00" stroke-opacity="0.26"/>
<line x1="99.6" y1="525.6" x2="99.8" y2="526.8" stroke-width="1.01" stroke-opacity="0.28"/>
<line x1="100.0" y1="528.0" x2="100.2" y2="529.2" stroke-width="1.03" stroke-opacity="0.30"/>
<line x1="100.4" y1="530.4" x2="100.6" y2="531.6" stroke-width="1.04" stroke-opacity="0.33"/>
<line x1="100.8" y1="532.8" x2="101.0" y2="534.0" stroke-width="1.06" stroke-opacity="0.35"/>
<line x1="101.2" y1="535.2" x2="101.4" y2="536.4" stroke-width="1.08" stroke-opacity="0.37"/>
<line x1="101.6" y1="537.6" x2="101.9" y2="538.8" stroke-width="1.09" stroke-opacity="0.39"/>
<line x1="102.1" y1="540.0" x2="102.3" y2="541.2" stroke-width="1.11" stroke-opacity="0.41"/>
<line x1="102.5" y1="542.4" x2="102.7" y2="543.5" stroke-width="1.13" stroke-opacity="0.43"/>
<line x1="102.9" y1="544.7" x2="103.1" y2="545.9" stroke-width="1.14" stroke-opacity="0.46"/>
<line x1="103.3" y1="547.1" x2="103.5" y2="548.3" stroke-width="1.16" stroke-opacity="0.48"/>
<line x1="103.7" y1="549.5" x2="103.9" y2="550.7" stroke-width="1.18" stroke-opacity="0.50"/>
<line x1="104.1" y1="551.9" x2="104.3" y2="553.1" stroke-width="1.19" stroke-opacity="0.52"/>
<line x1="104.5" y1="554.3" x2="104.8" y2="555.5" stroke-width="1.21" stroke-opacity="0.54"/>
<line x1="105.0" y1="556.7" x2="105.2" y2="557.9" stroke-width="1.23" stroke-opacity="0.57"/>
<line x1="105.4" y1="559.2" x2="105.6" y2="560.5" stroke-width="1.24" stroke-opacity="0.59"/>
<line x1="105.9" y1="561.9" x2="106.1" y2="563.3" stroke-width="1.26" stroke-opacity="0.61"/>
<line x1="106.4" y1="564.8" x2="106.6" y2="566.4" stroke-width="1.28" stroke-opacity="0.64"/>
<line x1="106.9" y1="568.1" x2="107.2" y2="569.8" stroke-width="1.30" stroke-opacity="0.67"/>
<line x1="107.5" y1="571.6" x2="107.9" y2="573.5" stroke-width="1.33" stroke-opacity="0.70"/>
<line x1="108.2" y1="575.5" x2="108.6" y2="577.5" stroke-width="1.35" stroke-opacity="0.74"/>
<line x1="108.9" y1="579.7" x2="109.3" y2="581.9" stroke-width="1.38" stroke-opacity="0.78"/>
<line x1="109.7" y1="584.3" x2="110.2" y2="586.7" stroke-width="1.42" stroke-opacity="0.82"/>
<line x1="110.6" y1="589.3" x2="111.1" y2="592.0" stroke-width="1.45" stroke-opacity="0.86"/>
<line x1="111.6" y1="594.8" x2="112.1" y2="597.7" stroke-width="1.49" stroke-opacity="0.91"/>
<line x1="112.6" y1="600.8" x2="113.2" y2="604.0" stroke-width="1.53" stroke-opacity="0.97"/>
<line x1="113.7" y1="607.3" x2="114.3" y2="610.8" stroke-width="1.57" stroke-opacity="1.00"/>
<line x1="115.0" y1="614.4" x2="115.6" y2="618.3" stroke-width="1.62" stroke-opacity="1.00"/>
<line x1="116.3" y1="622.2" x2="117.0" y2="626.4" stroke-width="1.68" stroke-opacity="1.00"/>
<line x1="117.8" y1="630.8" x2="118.6" y2="635.3" stroke-width="1.73" stroke-opacity="1.00"/>
<line x1="119.4" y1="640.0" x2="120.3" y2="645.0" stroke-width="1.80" stroke-opacity="1.00"/>
<line x1="121.2" y1="650.2" x2="122.1" y2="655.6" stroke-width="1.87" stroke-opacity="1.00"/>
<line x1="123.1" y1="661.3" x2="124.1" y2="667.2" stroke-width="1.94" stroke-opacity="1.00"/>
<line x1="125.2" y1="673.4" x2="126.3" y2="679.9" stroke-width="2.03" stroke-opacity="1.00"/>
<line x1="127.5" y1="686.6" x2="128.7" y2="693.7" stroke-width="2.12" stroke-opacity="1.00"/>
<line x1="130.0" y1="701.1" x2="131.3" y2="708.8" stroke-width="2.22" stroke-opacity="1.00"/>
<line x1="132.7" y1="716.8" x2="134.2" y2="725.3" stroke-width="2.33" stroke-opacity="1.00"/>
<line x1="135.7" y1="734.0" x2="137.3" y2="743.2" stroke-width="2.44" stroke-opacity="1.00"/>
<line x1="139.0" y1="752.9" x2="140.7" y2="762.9" stroke-width="2.57" stroke-opacity="1.00"/>
<line x1="142.5" y1="773.4" x2="144.4" y2="784.4" stroke-width="2.71" stroke-opacity="1.00"/>
<line x1="146.4" y1="795.8" x2="148.5" y2="807.8" stroke-width="2.87" stroke-opacity="1.00"/>
<line x1="150.7" y1="820.3" x2="152.9" y2="833.4" stroke-width="3.04" stroke-opacity="1.00"/>
<line x1="155.3" y1="847.0" x2="157.8" y2="861.3" stroke-width="3.22" stroke-opacity="1.00"/>
<line x1="102.4" y1="500.4" x2="102.9" y2="501.5" stroke-width="0.84" stroke-opacity="0.05"/>
<line x1="103.3" y1="502.7" x2="103.7" y2="503.9" stroke-width="0.86" stroke-opacity="0.07"/>
<line x1="104.1" y1="505.1" x2="104.5" y2="506.3" stroke-width="0.87" stroke-opacity="0.10"/>
<line x1="104.9" y1="507.5" x2="105.3" y2="508.7" stroke-width="0.89" stroke-opacity="0.12"/>
<line x1="105.8" y1="509.9" x2="106.2" y2="511.1" stroke-width="0.91" stroke-opacity="0.14"/>
<line x1="106.6" y1="512.3" x2="107.0" y2="513.4" stroke-width="0.92" stroke-opacity="0.16"/>
<line x1="107.4" y1="514.6" x2="107.8" y2="515.8" stroke-width="0.94" stroke-opacity="0.18"/>
<line x1="108.2" y1="517.0" x2="108.7" y2="518.2" stroke-width="0.95" stroke-opacity="0.21"/>
<line x1="109.1" y1="519.4" x2="109.5" y2="520.6" stroke-width="0.97" stroke-opacity="0.23"/>
<line x1="109.9" y1="521.8" x2="110.3" y2="523.0" stroke-width="0.99" stroke-opacity="0.25"/>
<line x1="110.7" y1="524.2" x2="111.1" y2="525.3" stroke-width="1.00" stroke-opacity="0.27"/>
<line x1="111.6" y1="526.5" x2="112.0" y2="527.7" stroke-width="1.02" stroke-opacity="0.29"/>
<line x1="112.4" y1="528.9" x2="112.8" y2="530.1" stroke-width="1.04" stroke-opacity="0.31"/>
<line x1="113.2" y1="531.3" x2="113.6" y2="532.5" stroke-width="1.05" stroke-opacity="0.34"/>
<line x1="114.0" y1="533.7" x2="114.5" y2="534.9" stroke-width="1.07" stroke-opacity="0.36"/>
<line x1="114.9" y1="536.1" x2="115.3" y2="537.2" stroke-width="1.09" stroke-opacity="0.38"/>
<line x1="115.7" y1="538.4" x2="116.1" y2="539.6" stroke-width="1.10" stroke-opacity="0.40"/>
<line x1="116.5" y1="540.8" x2="116.9" y2="542.0" stroke-width="1.12" stroke-opacity="0.42"/>
<line x1="117.4" y1="543.2" x2="117.8" y2="544.4" stroke-width="1.14" stroke-opacity="0.45"/>
<line x1="118.2" y1="545.6" x2="118.6" y2="546.8" stroke-width="1.15" stroke-opacity="0.47"/>
<line x1="119.0" y1="548.0" x2="119.4" y2="549.1" stroke-width="1.17" stroke-opacity="0.49"/>
<line x1="119.8" y1="550.3" x2="120.3" y2="551.5" stroke-width="1.18" stroke-opacity="0.51"/>
<line x1="120.7" y1="552.7" x2="121.1" y2="553.9" stroke-width="1.20" stroke-opacity="0.53"/>
<line x1="121.5" y1="555.1" x2="121.9" y2="556.3" stroke-width="1.22" stroke-opacity="0.55"/>
<line x1="122.3" y1="557.5" x2="122.8" y2="558.8" stroke-width="1.23" stroke-opacity="0.58"/>
<line x1="123.2" y1="560.1" x2="123.7" y2="561.5" stroke-width="1.25" stroke-opacity="0.60"/>
<line x1="124.2" y1="562.9" x2="124.7" y2="564.4" stroke-width="1.27" stroke-opacity="0.63"/>
<line x1="125.3" y1="566.0" x2="125.9" y2="567.6" stroke-width="1.29" stroke-opacity="0.65"/>
<line x1="126.5" y1="569.3" x2="127.1" y2="571.1" stroke-width="1.32" stroke-opacity="0.69"/>
<line x1="127.7" y1="573.0" x2="128.4" y2="575.0" stroke-width="1.34" stroke-opacity="0.72"/>
<line x1="129.1" y1="577.0" x2="129.9" y2="579.2" stroke-width="1.37" stroke-opacity="0.76"/>
<line x1="130.7" y1="581.4" x2="131.5" y2="583.8" stroke-width="1.40" stroke-opacity="0.80"/>
<line x1="132.3" y1="586.2" x2="133.2" y2="588.8" stroke-width="1.43" stroke-opacity="0.84"/>
<line x1="134.2" y1="591.4" x2="135.1" y2="594.2" stroke-width="1.47" stroke-opacity="0.89"/>
<line x1="136.1" y1="597.1" x2="137.2" y2="600.2" stroke-width="1.51" stroke-opacity="0.94"/>
<line x1="138.3" y1="603.4" x2="139.5" y2="606.7" stroke-width="1.55" stroke-opacity="1.00"/>
<line x1="140.7" y1="610.2" x2="141.9" y2="613.8" stroke-width="1.60" stroke-opacity="1.00"/>
<line x1="143.3" y1="617.6" x2="144.7" y2="621.6" stroke-width="1.65" stroke-opacity="1.00"/>
<line x1="146.1" y1="625.7" x2="147.6" y2="630.0" stroke-width="1.70" stroke-opacity="1.00"/>
<line x1="149.2" y1="634.6" x2="150.8" y2="639.3" stroke-width="1.77" stroke-opacity="1.00"/>
<line x1="152.6" y1="644.2" x2="154.4" y2="649.4" stroke-width="1.83" stroke-opacity="1.00"/>
<line x1="156.2" y1="654.8" x2="158.2" y2="660.5" stroke-width="1.91" stroke-opacity="1.00"/>
<line x1="160.3" y1="666.3" x2="162.4" y2="672.5" stroke-width="1.98" stroke-opacity="1.00"/>
<line x1="164.6" y1="678.9" x2="167.0" y2="685.7" stroke-width="2.07" stroke-opacity="1.00"/>
<line x1="169.4" y1="692.7" x2="172.0" y2="700.1" stroke-width="2.17" stroke-opacity="1.00"/>
<line x1="174.7" y1="707.7" x2="177.5" y2="715.8" stroke-width="2.27" stroke-opacity="1.00"/>
<line x1="180.4" y1="724.1" x2="183.4" y2="732.9" stroke-width="2.38" stroke-opacity="1.00"/>
<line x1="186.6" y1="742.1" x2="190.0" y2="751.6" stroke-width="2.51" stroke-opacity="1.00"/>
<line x1="193.4" y1="761.6" x2="197.1" y2="772.1" stroke-width="2.64" stroke-opacity="1.00"/>
<line x1="200.9" y1="783.0" x2="204.9" y2="794.4" stroke-width="2.79" stroke-opacity="1.00"/>
<line x1="209.0" y1="806.3" x2="213.3" y2="818.8" stroke-width="2.95" stroke-opacity="1.00"/>
<line x1="217.9" y1="831.8" x2="222.6" y2="845.4" stroke-width="3.13" stroke-opacity="1.00"/>
<line x1="110.3" y1="501.4" x2="110.9" y2="502.5" stroke-width="0.85" stroke-opacity="0.06"/>
<line x1="111.5" y1="503.7" x2="112.1" y2="504.9" stroke-width="0.86" stroke-opacity="0.09"/>
<line x1="112.8" y1="506.1" x2="113.4" y2="507.3" stroke-width="0.88" stroke-opacity="0.11"/>
<line x1="114.0" y1="508.5" x2="114.6" y2="509.7" stroke-width="0.90" stroke-opacity="0.13"/>
<line x1="115.3" y1="510.8" x2="115.9" y2="512.0" stroke-width="0.91" stroke-opacity="0.15"/>
<line x1="116.5" y1="513.2" x2="117.1" y2="514.4" stroke-width="0.93" stroke-opacity="0.17"/>
<line x1="117.7" y1="515.6" x2="118.4" y2="516.8" stroke-width="0.95" stroke-opacity="0.19"/>
<line x1="119.0" y1="518.0" x2="119.6" y2="519.1" stroke-width="0.96" stroke-opacity="0.22"/>
<line x1="120.2" y1="520.3" x2="120.8" y2="521.5" stroke-width="0.98" stroke-opacity="0.24"/>
<line x1="121.5" y1="522.7" x2="122.1" y2="523.9" stroke-width="1.00" stroke-opacity="0.26"/>
<line x1="122.7" y1="525.1" x2="123.3" y2="526.3" stroke-width="1.01" stroke-opacity="0.28"/>
<line x1="124.0" y1="527.4" x2="124.6" y2="528.6" stroke-width="1.03" stroke-opacity="0.30"/>
<line x1="125.2" y1="529.8" x2="125.8" y2="531.0" stroke-width="1.04" stroke-opacity="0.33"/>
<line x1="126.4" y1="532.2" x2="127.1" y2="533.4" stroke-width="1.06" stroke-opacity="0.35"/>
<line x1="127.7" y1="534.5" x2="128.3" y2="535.7" stroke-width="1.08" stroke-opacity="0.37"/>
<line x1="128.9" y1="536.9" x2="129.6" y2="538.1" stroke-width="1.09" stroke-opacity="0.39"/>
<line x1="130.2" y1="539.3" x2="130.8" y2="540.5" stroke-width="1.11" stroke-opacity="0.41"/>
<line x1="131.4" y1="541.7" x2="132.0" y2="542.8" stroke-width="1.13" stroke-opacity="0.43"/>
<line x1="132.7" y1="544.0" x2="133.3" y2="545.2" stroke-width="1.14" stroke-opacity="0.46"/>
<line x1="133.9" y1="546.4" x2="134.5" y2="547.6" stroke-width="1.16" stroke-opacity="0.48"/>
<line x1="135.1" y1="548.8" x2="135.8" y2="550.0" stroke-width="1.18" stroke-opacity="0.50"/>
<line x1="136.4" y1="551.1" x2="137.0" y2="552.3" stroke-width="1.19" stroke-opacity="0.52"/>
<line x1="137.6" y1="553.5" x2="138.3" y2="554.7" stroke-width="1.21" stroke-opacity="0.54"/>
<line x1="138.9" y1="555.9" x2="139.5" y2="557.1" stroke-width="1.23" stroke-opacity="0.57"/>
<line x1="140.2" y1="558.3" x2="140.9" y2="559.7" stroke-width="1.24" stroke-opacity="0.59"/>
<line x1="141.6" y1="561.0" x2="142.3" y2="562.5" stroke-width="1.26" stroke-opacity="0.61"/>
<line x1="143.1" y1="564.0" x2="143.9" y2="565.5" stroke-width="1.28" stroke-opacity="0.64"/>
<line x1="144.8" y1="567.2" x2="145.7" y2="568.9" stroke-width="1.30" stroke-opacity="0.67"/>
<line x1="146.6" y1="570.7" x2="147.6" y2="572.5" stroke-width="1.33" stroke-opacity="0.70"/>
<line x1="148.6" y1="574.5" x2="149.7" y2="576.5" stroke-width="1.35" stroke-opacity="0.74"/>
<line x1="150.8" y1="578.7" x2="152.0" y2="580.9" stroke-width="1.38" stroke-opacity="0.78"/>
<line x1="153.2" y1="583.2" x2="154.5" y2="585.7" stroke-width="1.42" stroke-opacity="0.82"/>
<line x1="155.8" y1="588.2" x2="157.2" y2="590.9" stroke-width="1.45" stroke-opacity="0.86"/>
<line x1="158.7" y1="593.6" x2="160.2" y2="596.6" stroke-width="1.49" stroke-opacity="0.91"/>
<line x1="161.8" y1="599.6" x2="163.5" y2="602.8" stroke-width="1.53" stroke-opacity="0.97"/>
<line x1="165.2" y1="606.1" x2="167.0" y2="609.5" stroke-width="1.57" stroke-opacity="1.00"/>
<line x1="168.9" y1="613.2" x2="170.9" y2="616.9" stroke-width="1.62" stroke-opacity="1.00"/>
<line x1="173.0" y1="620.9" x2="175.1" y2="625.0" stroke-width="1.68" stroke-opacity="1.00"/>
<line x1="177.4" y1="629.3" x2="179.8" y2="633.8" stroke-width="1.73" stroke-opacity="1.00"/>
<line x1="182.2" y1="638.5" x2="184.8" y2="643.5" stroke-width="1.80" stroke-opacity="1.00"/>
<line x1="187.5" y1="648.6" x2="190.3" y2="654.0" stroke-width="1.87" stroke-opacity="1.00"/>
<line x1="193.3" y1="659.6" x2="196.4" y2="665.5" stroke-width="1.94" stroke-opacity="1.00"/>
<line x1="199.6" y1="671.6" x2="203.0" y2="678.0" stroke-width="2.03" stroke-opacity="1.00"/>
<line x1="206.5" y1="684.7" x2="210.1" y2="691.7" stroke-width="2.12" stroke-opacity="1.00"/>
<line x1="214.0" y1="699.1" x2="218.0" y2="706.7" stroke-width="2.22" stroke-opacity="1.00"/>
<line x1="222.2" y1="714.7" x2="226.6" y2="723.0" stroke-width="2.33" stroke-opacity="1.00"/>
<line x1="231.1" y1="731.8" x2="235.9" y2="740.9" stroke-width="2.44" stroke-opacity="1.00"/>
<line x1="240.9" y1="750.4" x2="246.2" y2="760.4" stroke-width="2.57" stroke-opacity="1.00"/>
<line x1="251.6" y1="770.8" x2="257.3" y2="781.7" stroke-width="2.71" stroke-opacity="1.00"/>
<line x1="263.3" y1="793.0" x2="269.5" y2="804.9" stroke-width="2.87" stroke-opacity="1.00"/>
<line x1="276.0" y1="817.3" x2="282.8" y2="830.3" stroke-width="3.04" stroke-opacity="1.00"/>
<line x1="289.9" y1="843.8" x2="297.4" y2="858.0" stroke-width="3.22" stroke-opacity="1.00"/>
<line x1="116.9" y1="500.0" x2="117.7" y2="501.2" stroke-width="0.84" stroke-opacity="0.05"/>
<line x1="118.5" y1="502.4" x2="119.4" y2="503.5" stroke-width="0.86" stroke-opacity="0.07"/>
<line x1="120.2" y1="504.7" x2="121.0" y2="505.9" stroke-width="0.87" stroke-opacity="0.10"/>
<line x1="121.8" y1="507.1" x2="122.7" y2="508.3" stroke-width="0.89" stroke-opacity="0.12"/>
<line x1="123.5" y1="509.4" x2="124.3" y2="510.6" stroke-width="0.91" stroke-opacity="0.14"/>
<line x1="125.2" y1="511.8" x2="126.0" y2="513.0" stroke-width="0.92" stroke-opacity="0.16"/>
<line x1="126.8" y1="514.2" x2="127.7" y2="515.3" stroke-width="0.94" stroke-opacity="0.18"/>
<line x1="128.5" y1="516.5" x2="129.3" y2="517.7" stroke-width="0.95" stroke-opacity="0.21"/>
<line x1="130.1" y1="518.9" x2="131.0" y2="520.1" stroke-width="0.97" stroke-opacity="0.23"/>
<line x1="131.8" y1="521.2" x2="132.6" y2="522.4" stroke-width="0.99" stroke-opacity="0.25"/>
<line x1="133.5" y1="523.6" x2="134.3" y2="524.8" stroke-width="1.00" stroke-opacity="0.27"/>
<line x1="135.1" y1="526.0" x2="135.9" y2="527.2" stroke-width="1.02" stroke-opacity="0.29"/>
<line x1="136.8" y1="528.3" x2="137.6" y2="529.5" stroke-width="1.04" stroke-opacity="0.31"/>
<line x1="138.4" y1="530.7" x2="139.3" y2="531.9" stroke-width="1.05" stroke-opacity="0.34"/>
<line x1="140.1" y1="533.1" x2="140.9" y2="534.2" stroke-width="1.07" stroke-opacity="0.36"/>
<line x1="141.7" y1="535.4" x2="142.6" y2="536.6" stroke-width="1.09" stroke-opacity="0.38"/>
<line x1="143.4" y1="537.8" x2="144.2" y2="539.0" stroke-width="1.10" stroke-opacity="0.40"/>
<line x1="145.1" y1="540.1" x2="145.9" y2="541.3" stroke-width="1.12" stroke-opacity="0.42"/>
<line x1="146.7" y1="542.5" x2="147.5" y2="543.7" stroke-width="1.14" stroke-opacity="0.45"/>
<line x1="148.4" y1="544.9" x2="149.2" y2="546.0" stroke-width="1.15" stroke-opacity="0.47"/>
<line x1="150.0" y1="547.2" x2="150.9" y2="548.4" stroke-width="1.17" stroke-opacity="0.49"/>
<line x1="151.7" y1="549.6" x2="152.5" y2="550.8" stroke-width="1.18" stroke-opacity="0.51"/>
<line x1="153.3" y1="551.9" x2="154.2" y2="553.1" stroke-width="1.20" stroke-opacity="0.53"/>
<line x1="155.0" y1="554.3" x2="155.8" y2="555.5" stroke-width="1.22" stroke-opacity="0.55"/>
<line x1="156.7" y1="556.7" x2="157.6" y2="557.9" stroke-width="1.23" stroke-opacity="0.58"/>
<line x1="158.5" y1="559.2" x2="159.4" y2="560.6" stroke-width="1.25" stroke-opacity="0.60"/>
<line x1="160.4" y1="562.0" x2="161.5" y2="563.5" stroke-width="1.27" stroke-opacity="0.63"/>
<line x1="162.6" y1="565.1" x2="163.7" y2="566.7" stroke-width="1.29" stroke-opacity="0.65"/>
<line x1="164.9" y1="568.4" x2="166.2" y2="570.2" stroke-width="1.32" stroke-opacity="0.69"/>
<line x1="167.5" y1="572.1" x2="168.9" y2="574.0" stroke-width="1.34" stroke-opacity="0.72"/>
<line x1="170.3" y1="576.0" x2="171.8" y2="578.2" stroke-width="1.37" stroke-opacity="0.76"/>
<line x1="173.3" y1="580.4" x2="175.0" y2="582.7" stroke-width="1.40" stroke-opacity="0.80"/>
<line x1="176.7" y1="585.1" x2="178.5" y2="587.7" stroke-width="1.43" stroke-opacity="0.84"/>
<line x1="180.3" y1="590.3" x2="182.3" y2="593.1" stroke-width="1.47" stroke-opacity="0.89"/>
<line x1="184.3" y1="596.0" x2="186.4" y2="599.0" stroke-width="1.51" stroke-opacity="0.94"/>
<line x1="188.6" y1="602.2" x2="190.9" y2="605.5" stroke-width="1.55" stroke-opacity="1.00"/>
<line x1="193.4" y1="608.9" x2="195.9" y2="612.5" stroke-width="1.60" stroke-opacity="1.00"/>
<line x1="198.5" y1="616.3" x2="201.3" y2="620.2" stroke-width="1.65" stroke-opacity="1.00"/>
<line x1="204.2" y1="624.3" x2="207.2" y2="628.6" stroke-width="1.70" stroke-opacity="1.00"/>
<line x1="210.4" y1="633.1" x2="213.7" y2="637.8" stroke-width="1.77" stroke-opacity="1.00"/>
<line x1="217.1" y1="642.7" x2="220.7" y2="647.8" stroke-width="1.83" stroke-opacity="1.00"/>
<line x1="224.5" y1="653.2" x2="228.4" y2="658.8" stroke-width="1.91" stroke-opacity="1.00"/>
<line x1="232.5" y1="664.6" x2="236.8" y2="670.7" stroke-width="1.98" stroke-opacity="1.00"/>
<line x1="241.3" y1="677.1" x2="246.0" y2="683.8" stroke-width="2.07" stroke-opacity="1.00"/>
<line x1="250.9" y1="690.8" x2="256.0" y2="698.1" stroke-width="2.17" stroke-opacity="1.00"/>
<line x1="261.3" y1="705.7" x2="266.9" y2="713.6" stroke-width="2.27" stroke-opacity="1.00"/>
<line x1="272.8" y1="721.9" x2="278.9" y2="730.6" stroke-width="2.38" stroke-opacity="1.00"/>
<line x1="285.2" y1="739.7" x2="291.9" y2="749.2" stroke-width="2.51" stroke-opacity="1.00"/>
<line x1="298.9" y1="759.1" x2="306.2" y2="769.5" stroke-width="2.64" stroke-opacity="1.00"/>
<line x1="313.8" y1="780.3" x2="321.7" y2="791.6" stroke-width="2.79" stroke-opacity="1.00"/>
<line x1="330.0" y1="803.4" x2="338.7" y2="815.8" stroke-width="2.95" stroke-opacity="1.00"/>
<line x1="347.8" y1="828.7" x2="357.2" y2="842.2" stroke-width="3.13" stroke-opacity="1.00"/>
<line x1="125.1" y1="501.0" x2="126.2" y2="502.2" stroke-width="0.85" stroke-opacity="0.06"/>
<line x1="127.2" y1="503.4" x2="128.2" y2="504.5" stroke-width="0.86" stroke-opacity="0.09"/>
<line x1="129.3" y1="505.7" x2="130.3" y2="506.9" stroke-width="0.88" stroke-opacity="0.11"/>
<line x1="131.3" y1="508.1" x2="132.4" y2="509.2" stroke-width="0.90" stroke-opacity="0.13"/>
<line x1="133.4" y1="510.4" x2="134.5" y2="511.6" stroke-width="0.91" stroke-opacity="0.15"/>
<line x1="135.5" y1="512.8" x2="136.5" y2="513.9" stroke-width="0.93" stroke-opacity="0.17"/>
<line x1="137.6" y1="515.1" x2="138.6" y2="516.3" stroke-width="0.95" stroke-opacity="0.19"/>
<line x1="139.6" y1="517.5" x2="140.7" y2="518.6" stroke-width="0.96" stroke-opacity="0.22"/>
<line x1="141.7" y1="519.8" x2="142.7" y2="521.0" stroke-width="0.98" stroke-opacity="0.24"/>
<line x1="143.8" y1="522.2" x2="144.8" y2="523.3" stroke-width="1.00" stroke-opacity="0.26"/>
<line x1="145.9" y1="524.5" x2="146.9" y2="525.7" stroke-width="1.01" stroke-opacity="0.28"/>
<line x1="147.9" y1="526.9" x2="149.0" y2="528.0" stroke-width="1.03" stroke-opacity="0.30"/>
<line x1="150.0" y1="529.2" x2="151.0" y2="530.4" stroke-width="1.04" stroke-opacity="0.33"/>
<line x1="152.1" y1="531.6" x2="153.1" y2="532.7" stroke-width="1.06" stroke-opacity="0.35"/>
<line x1="154.1" y1="533.9" x2="155.2" y2="535.1" stroke-width="1.08" stroke-opacity="0.37"/>
<line x1="156.2" y1="536.3" x2="157.3" y2="537.4" stroke-width="1.09" stroke-opacity="0.39"/>
<line x1="158.3" y1="538.6" x2="159.3" y2="539.8" stroke-width="1.11" stroke-opacity="0.41"/>
<line x1="160.4" y1="541.0" x2="161.4" y2="542.1" stroke-width="1.13" stroke-opacity="0.43"/>
<line x1="162.4" y1="543.3" x2="163.5" y2="544.5" stroke-width="1.14" stroke-opacity="0.46"/>
<line x1="164.5" y1="545.7" x2="165.5" y2="546.8" stroke-width="1.16" stroke-opacity="0.48"/>
<line x1="166.6" y1="548.0" x2="167.6" y2="549.2" stroke-width="1.18" stroke-opacity="0.50"/>
<line x1="168.7" y1="550.4" x2="169.7" y2="551.5" stroke-width="1.19" stroke-opacity="0.52"/>
<line x1="170.7" y1="552.7" x2="171.8" y2="553.9" stroke-width="1.21" stroke-opacity="0.54"/>
<line x1="172.8" y1="555.1" x2="173.8" y2="556.3" stroke-width="1.23" stroke-opacity="0.57"/>
<line x1="174.9" y1="557.5" x2="176.1" y2="558.8" stroke-width="1.24" stroke-opacity="0.59"/>
<line x1="177.3" y1="560.2" x2="178.6" y2="561.6" stroke-width="1.26" stroke-opacity="0.61"/>
<line x1="179.9" y1="563.1" x2="181.2" y2="564.6" stroke-width="1.28" stroke-opacity="0.64"/>
<line x1="182.7" y1="566.3" x2="184.2" y2="568.0" stroke-width="1.30" stroke-opacity="0.67"/>
<line x1="185.7" y1="569.7" x2="187.4" y2="571.6" stroke-width="1.33" stroke-opacity="0.70"/>
<line x1="189.1" y1="573.5" x2="190.9" y2="575.6" stroke-width="1.35" stroke-opacity="0.74"/>
<line x1="192.7" y1="577.7" x2="194.7" y2="579.9" stroke-width="1.38" stroke-opacity="0.78"/>
<line x1="196.7" y1="582.2" x2="198.8" y2="584.6" stroke-width="1.42" stroke-opacity="0.82"/>
<line x1="201.1" y1="587.1" x2="203.4" y2="589.8" stroke-width="1.45" stroke-opacity="0.86"/>
<line x1="205.8" y1="592.5" x2="208.4" y2="595.4" stroke-width="1.49" stroke-opacity="0.91"/>
<line x1="211.0" y1="598.4" x2="213.8" y2="601.6" stroke-width="1.53" stroke-opacity="0.97"/>
<line x1="216.7" y1="604.8" x2="219.7" y2="608.3" stroke-width="1.57" stroke-opacity="1.00"/>
<line x1="222.9" y1="611.9" x2="226.2" y2="615.6" stroke-width="1.62" stroke-opacity="1.00"/>
<line x1="229.6" y1="619.5" x2="233.2" y2="623.6" stroke-width="1.68" stroke-opacity="1.00"/>
<line x1="237.0" y1="627.9" x2="241.0" y2="632.4" stroke-width="1.73" stroke-opacity="1.00"/>
<line x1="245.1" y1="637.0" x2="249.4" y2="641.9" stroke-width="1.80" stroke-opacity="1.00"/>
<line x1="253.9" y1="647.0" x2="258.6" y2="652.4" stroke-width="1.87" stroke-opacity="1.00"/>
<line x1="263.5" y1="657.9" x2="268.6" y2="663.8" stroke-width="1.94" stroke-opacity="1.00"/>
<line x1="274.0" y1="669.8" x2="279.6" y2="676.2" stroke-width="2.03" stroke-opacity="1.00"/>
<line x1="285.5" y1="682.8" x2="291.6" y2="689.8" stroke-width="2.12" stroke-opacity="1.00"/>
<line x1="298.0" y1="697.0" x2="304.7" y2="704.6" stroke-width="2.22" stroke-opacity="1.00"/>
<line x1="311.6" y1="712.6" x2="319.0" y2="720.8" stroke-width="2.33" stroke-opacity="1.00"/>
<line x1="326.6" y1="729.5" x2="334.6" y2="738.5" stroke-width="2.44" stroke-opacity="1.00"/>
<line x1="342.9" y1="748.0" x2="351.6" y2="757.9" stroke-width="2.57" stroke-opacity="1.00"/>
<line x1="360.7" y1="768.2" x2="370.2" y2="779.0" stroke-width="2.71" stroke-opacity="1.00"/>
<line x1="380.1" y1="790.2" x2="390.5" y2="802.0" stroke-width="2.87" stroke-opacity="1.00"/>
<line x1="401.4" y1="814.3" x2="412.7" y2="827.2" stroke-width="3.04" stroke-opacity="1.00"/>
<line x1="424.6" y1="840.6" x2="436.9" y2="854.6" stroke-width="3.22" stroke-opacity="1.00"/>
<line x1="131.3" y1="499.7" x2="132.6" y2="500.8" stroke-width="0.84" stroke-opacity="0.05"/>
<line x1="133.8" y1="502.0" x2="135.0" y2="503.2" stroke-width="0.86" stroke-opacity="0.07"/>
<line x1="136.3" y1="504.3" x2="137.5" y2="505.5" stroke-width="0.87" stroke-opacity="0.10"/>
<line x1="138.8" y1="506.7" x2="140.0" y2="507.9" stroke-width="0.89" stroke-opacity="0.12"/>
<line x1="141.3" y1="509.0" x2="142.5" y2="510.2" stroke-width="0.91" stroke-opacity="0.14"/>
<line x1="143.7" y1="511.4" x2="145.0" y2="512.5" stroke-width="0.92" stroke-opacity="0.16"/>
<line x1="146.2" y1="513.7" x2="147.5" y2="514.9" stroke-width="0.94" stroke-opacity="0.18"/>
<line x1="148.7" y1="516.0" x2="150.0" y2="517.2" stroke-width="0.95" stroke-opacity="0.21"/>
<line x1="151.2" y1="518.4" x2="152.5" y2="519.6" stroke-width="0.97" stroke-opacity="0.23"/>
<line x1="153.7" y1="520.7" x2="154.9" y2="521.9" stroke-width="0.99" stroke-opacity="0.25"/>
<line x1="156.2" y1="523.1" x2="157.4" y2="524.2" stroke-width="1.00" stroke-opacity="0.27"/>
<line x1="158.7" y1="525.4" x2="159.9" y2="526.6" stroke-width="1.02" stroke-opacity="0.29"/>
<line x1="161.2" y1="527.7" x2="162.4" y2="528.9" stroke-width="1.04" stroke-opacity="0.31"/>
<line x1="163.6" y1="530.1" x2="164.9" y2="531.3" stroke-width="1.05" stroke-opacity="0.34"/>
<line x1="166.1" y1="532.4" x2="167.4" y2="533.6" stroke-width="1.07" stroke-opacity="0.36"/>
<line x1="168.6" y1="534.8" x2="169.9" y2="535.9" stroke-width="1.09" stroke-opacity="0.38"/>
<line x1="171.1" y1="537.1" x2="172.3" y2="538.3" stroke-width="1.10" stroke-opacity="0.40"/>
<line x1="173.6" y1="539.5" x2="174.8" y2="540.6" stroke-width="1.12" stroke-opacity="0.42"/>
<line x1="176.1" y1="541.8" x2="177.3" y2="543.0" stroke-width="1.14" stroke-opacity="0.45"/>
<line x1="178.6" y1="544.1" x2="179.8" y2="545.3" stroke-width="1.15" stroke-opacity="0.47"/>
<line x1="181.1" y1="546.5" x2="182.3" y2="547.6" stroke-width="1.17" stroke-opacity="0.49"/>
<line x1="183.5" y1="548.8" x2="184.8" y2="550.0" stroke-width="1.18" stroke-opacity="0.51"/>
<line x1="186.0" y1="551.2" x2="187.3" y2="552.3" stroke-width="1.20" stroke-opacity="0.53"/>
<line x1="188.5" y1="553.5" x2="189.8" y2="554.7" stroke-width="1.22" stroke-opacity="0.55"/>
<line x1="191.0" y1="555.9" x2="192.3" y2="557.1" stroke-width="1.23" stroke-opacity="0.58"/>
<line x1="193.7" y1="558.4" x2="195.2" y2="559.7" stroke-width="1.25" stroke-opacity="0.60"/>
<line x1="196.7" y1="561.2" x2="198.2" y2="562.6" stroke-width="1.27" stroke-opacity="0.63"/>
<line x1="199.9" y1="564.2" x2="201.6" y2="565.8" stroke-width="1.29" stroke-opacity="0.65"/>
<line x1="203.4" y1="567.5" x2="205.3" y2="569.3" stroke-width="1.32" stroke-opacity="0.69"/>
<line x1="207.2" y1="571.1" x2="209.3" y2="573.0" stroke-width="1.34" stroke-opacity="0.72"/>
<line x1="211.4" y1="575.1" x2="213.7" y2="577.2" stroke-width="1.37" stroke-opacity="0.76"/>
<line x1="216.0" y1="579.4" x2="218.5" y2="581.7" stroke-width="1.40" stroke-opacity="0.80"/>
<line x1="221.0" y1="584.1" x2="223.7" y2="586.6" stroke-width="1.43" stroke-opacity="0.84"/>
<line x1="226.5" y1="589.2" x2="229.4" y2="592.0" stroke-width="1.47" stroke-opacity="0.89"/>
<line x1="232.4" y1="594.8" x2="235.6" y2="597.8" stroke-width="1.51" stroke-opacity="0.94"/>
<line x1="238.9" y1="601.0" x2="242.4" y2="604.2" stroke-width="1.55" stroke-opacity="1.00"/>
<line x1="246.0" y1="607.6" x2="249.8" y2="611.2" stroke-width="1.60" stroke-opacity="1.00"/>
<line x1="253.8" y1="614.9" x2="258.0" y2="618.9" stroke-width="1.65" stroke-opacity="1.00"/>
<line x1="262.3" y1="622.9" x2="266.8" y2="627.2" stroke-width="1.70" stroke-opacity="1.00"/>
<line x1="271.5" y1="631.6" x2="276.5" y2="636.3" stroke-width="1.77" stroke-opacity="1.00"/>
<line x1="281.7" y1="641.2" x2="287.1" y2="646.2" stroke-width="1.83" stroke-opacity="1.00"/>
<line x1="292.7" y1="651.5" x2="298.6" y2="657.1" stroke-width="1.91" stroke-opacity="1.00"/>
<line x1="304.8" y1="662.9" x2="311.2" y2="669.0" stroke-width="1.98" stroke-opacity="1.00"/>
<line x1="317.9" y1="675.3" x2="324.9" y2="681.9" stroke-width="2.07" stroke-opacity="1.00"/>
<line x1="332.3" y1="688.8" x2="340.0" y2="696.0" stroke-width="2.17" stroke-opacity="1.00"/>
<line x1="348.0" y1="703.6" x2="356.4" y2="711.5" stroke-width="2.27" stroke-opacity="1.00"/>
<line x1="365.1" y1="719.7" x2="374.3" y2="728.3" stroke-width="2.38" stroke-opacity="1.00"/>
<line x1="383.9" y1="737.4" x2="393.9" y2="746.8" stroke-width="2.51" stroke-opacity="1.00"/>
<line x1="404.3" y1="756.6" x2="415.2" y2="766.9" stroke-width="2.64" stroke-opacity="1.00"/>
<line x1="426.6" y1="777.6" x2="438.6" y2="788.8" stroke-width="2.79" stroke-opacity="1.00"/>
<line x1="451.0" y1="800.6" x2="464.0" y2="812.8" stroke-width="2.95" stroke-opacity="1.00"/>
<line x1="477.6" y1="825.6" x2="491.9" y2="839.0" stroke-width="3.13" stroke-opacity="1.00"/>
<line x1="140.0" y1="500.7" x2="141.4" y2="501.8" stroke-width="0.85" stroke-opacity="0.06"/>
<line x1="142.9" y1="503.0" x2="144.3" y2="504.1" stroke-width="0.86" stroke-opacity="0.09"/>
<line x1="145.8" y1="505.3" x2="147.2" y2="506.5" stroke-width="0.88" stroke-opacity="0.11"/>
<line x1="148.7" y1="507.6" x2="150.1" y2="508.8" stroke-width="0.90" stroke-opacity="0.13"/>
<line x1="151.6" y1="510.0" x2="153.0" y2="511.1" stroke-width="0.91" stroke-opacity="0.15"/>
<line x1="154.5" y1="512.3" x2="155.9" y2="513.5" stroke-width="0.93" stroke-opacity="0.17"/>
<line x1="157.4" y1="514.6" x2="158.8" y2="515.8" stroke-width="0.95" stroke-opacity="0.19"/>
<line x1="160.3" y1="517.0" x2="161.7" y2="518.1" stroke-width="0.96" stroke-opacity="0.22"/>
<line x1="163.2" y1="519.3" x2="164.6" y2="520.5" stroke-width="0.98" stroke-opacity="0.24"/>
<line x1="166.1" y1="521.6" x2="167.5" y2="522.8" stroke-width="1.00" stroke-opacity="0.26"/>
<line x1="169.0" y1="524.0" x2="170.4" y2="525.1" stroke-width="1.01" stroke-opacity="0.28"/>
<line x1="171.9" y1="526.3" x2="173.3" y2="527.5" stroke-width="1.03" stroke-opacity="0.30"/>
<line x1="174.8" y1="528.6" x2="176.2" y2="529.8" stroke-width="1.04" stroke-opacity="0.33"/>
<line x1="177.7" y1="531.0" x2="179.2" y2="532.1" stroke-width="1.06" stroke-opacity="0.35"/>
<line x1="180.6" y1="533.3" x2="182.1" y2="534.4" stroke-width="1.08" stroke-opacity="0.37"/>
<line x1="183.5" y1="535.6" x2="185.0" y2="536.8" stroke-width="1.09" stroke-opacity="0.39"/>
<line x1="186.4" y1="537.9" x2="187.9" y2="539.1" stroke-width="1.11" stroke-opacity="0.41"/>
<line x1="189.3" y1="540.3" x2="190.8" y2="541.4" stroke-width="1.13" stroke-opacity="0.43"/>
<line x1="192.2" y1="542.6" x2="193.7" y2="543.8" stroke-width="1.14" stroke-opacity="0.46"/>
<line x1="195.1" y1="544.9" x2="196.6" y2="546.1" stroke-width="1.16" stroke-opacity="0.48"/>
<line x1="198.0" y1="547.3" x2="199.5" y2="548.4" stroke-width="1.18" stroke-opacity="0.50"/>
<line x1="200.9" y1="549.6" x2="202.4" y2="550.8" stroke-width="1.19" stroke-opacity="0.52"/>
<line x1="203.8" y1="551.9" x2="205.3" y2="553.1" stroke-width="1.21" stroke-opacity="0.54"/>
<line x1="206.7" y1="554.3" x2="208.2" y2="555.4" stroke-width="1.23" stroke-opacity="0.57"/>
<line x1="209.7" y1="556.7" x2="211.3" y2="558.0" stroke-width="1.24" stroke-opacity="0.59"/>
<line x1="213.0" y1="559.3" x2="214.8" y2="560.7" stroke-width="1.26" stroke-opacity="0.61"/>
<line x1="216.6" y1="562.2" x2="218.5" y2="563.8" stroke-width="1.28" stroke-opacity="0.64"/>
<line x1="220.5" y1="565.4" x2="222.6" y2="567.0" stroke-width="1.30" stroke-opacity="0.67"/>
<line x1="224.8" y1="568.8" x2="227.1" y2="570.6" stroke-width="1.33" stroke-opacity="0.70"/>
<line x1="229.5" y1="572.6" x2="232.0" y2="574.6" stroke-width="1.35" stroke-opacity="0.74"/>
<line x1="234.6" y1="576.7" x2="237.3" y2="578.9" stroke-width="1.38" stroke-opacity="0.78"/>
<line x1="240.2" y1="581.2" x2="243.2" y2="583.5" stroke-width="1.42" stroke-opacity="0.82"/>
<line x1="246.3" y1="586.0" x2="249.5" y2="588.7" stroke-width="1.45" stroke-opacity="0.86"/>
<line x1="252.9" y1="591.4" x2="256.5" y2="594.3" stroke-width="1.49" stroke-opacity="0.91"/>
<line x1="260.2" y1="597.2" x2="264.1" y2="600.4" stroke-width="1.53" stroke-opacity="0.97"/>
<line x1="268.1" y1="603.6" x2="272.4" y2="607.0" stroke-width="1.57" stroke-opacity="1.00"/>
<line x1="276.8" y1="610.6" x2="281.4" y2="614.3" stroke-width="1.62" stroke-opacity="1.00"/>
<line x1="286.3" y1="618.2" x2="291.3" y2="622.2" stroke-width="1.68" stroke-opacity="1.00"/>
<line x1="296.6" y1="626.5" x2="302.1" y2="630.9" stroke-width="1.73" stroke-opacity="1.00"/>
<line x1="307.9" y1="635.5" x2="313.9" y2="640.4" stroke-width="1.80" stroke-opacity="1.00"/>
<line x1="320.2" y1="645.4" x2="326.8" y2="650.7" stroke-width="1.87" stroke-opacity="1.00"/>
<line x1="333.7" y1="656.3" x2="340.9" y2="662.0" stroke-width="1.94" stroke-opacity="1.00"/>
<line x1="348.4" y1="668.1" x2="356.2" y2="674.4" stroke-width="2.03" stroke-opacity="1.00"/>
<line x1="364.4" y1="681.0" x2="373.0" y2="687.8" stroke-width="2.12" stroke-opacity="1.00"/>
<line x1="382.0" y1="695.0" x2="391.3" y2="702.6" stroke-width="2.22" stroke-opacity="1.00"/>
<line x1="401.1" y1="710.4" x2="411.3" y2="718.6" stroke-width="2.33" stroke-opacity="1.00"/>
<line x1="422.0" y1="727.2" x2="433.2" y2="736.2" stroke-width="2.44" stroke-opacity="1.00"/>
<line x1="444.8" y1="745.5" x2="457.0" y2="755.3" stroke-width="2.57" stroke-opacity="1.00"/>
<line x1="469.8" y1="765.6" x2="483.1" y2="776.3" stroke-width="2.71" stroke-opacity="1.00"/>
<line x1="497.0" y1="787.4" x2="511.5" y2="799.1" stroke-width="2.87" stroke-opacity="1.00"/>
<line x1="526.7" y1="811.3" x2="542.6" y2="824.1" stroke-width="3.04" stroke-opacity="1.00"/>
<line x1="559.2" y1="837.4" x2="576.5" y2="851.3" stroke-width="3.22" stroke-opacity="1.00"/>
<line x1="145.8" y1="499.3" x2="147.4" y2="500.5" stroke-width="0.84" stroke-opacity="0.05"/>
<line x1="149.1" y1="501.6" x2="150.7" y2="502.8" stroke-width="0.86" stroke-opacity="0.07"/>
<line x1="152.4" y1="504.0" x2="154.0" y2="505.1" stroke-width="0.87" stroke-opacity="0.10"/>
<line x1="155.7" y1="506.3" x2="157.4" y2="507.4" stroke-width="0.89" stroke-opacity="0.12"/>
<line x1="159.0" y1="508.6" x2="160.7" y2="509.8" stroke-width="0.91" stroke-opacity="0.14"/>
<line x1="162.3" y1="510.9" x2="164.0" y2="512.1" stroke-width="0.92" stroke-opacity="0.16"/>
<line x1="165.6" y1="513.2" x2="167.3" y2="514.4" stroke-width="0.94" stroke-opacity="0.18"/>
<line x1="169.0" y1="515.6" x2="170.6" y2="516.7" stroke-width="0.95" stroke-opacity="0.21"/>
<line x1="172.3" y1="517.9" x2="173.9" y2="519.0" stroke-width="0.97" stroke-opacity="0.23"/>
<line x1="175.6" y1="520.2" x2="177.3" y2="521.4" stroke-width="0.99" stroke-opacity="0.25"/>
<line x1="178.9" y1="522.5" x2="180.6" y2="523.7" stroke-width="1.00" stroke-opacity="0.27"/>
<line x1="182.2" y1="524.8" x2="183.9" y2="526.0" stroke-width="1.02" stroke-opacity="0.29"/>
<line x1="185.5" y1="527.2" x2="187.2" y2="528.3" stroke-width="1.04" stroke-opacity="0.31"/>
<line x1="188.9" y1="529.5" x2="190.5" y2="530.6" stroke-width="1.05" stroke-opacity="0.34"/>
<line x1="192.2" y1="531.8" x2="193.8" y2="533.0" stroke-width="1.07" stroke-opacity="0.36"/>
<line x1="195.5" y1="534.1" x2="197.1" y2="535.3" stroke-width="1.09" stroke-opacity="0.38"/>
<line x1="198.8" y1="536.4" x2="200.5" y2="537.6" stroke-width="1.10" stroke-opacity="0.40"/>
<line x1="202.1" y1="538.8" x2="203.8" y2="539.9" stroke-width="1.12" stroke-opacity="0.42"/>
<line x1="205.4" y1="541.1" x2="207.1" y2="542.2" stroke-width="1.14" stroke-opacity="0.45"/>
<line x1="208.8" y1="543.4" x2="210.4" y2="544.6" stroke-width="1.15" stroke-opacity="0.47"/>
<line x1="212.1" y1="545.7" x2="213.7" y2="546.9" stroke-width="1.17" stroke-opacity="0.49"/>
<line x1="215.4" y1="548.1" x2="217.0" y2="549.2" stroke-width="1.18" stroke-opacity="0.51"/>
<line x1="218.7" y1="550.4" x2="220.4" y2="551.5" stroke-width="1.20" stroke-opacity="0.53"/>
<line x1="222.0" y1="552.7" x2="223.7" y2="553.9" stroke-width="1.22" stroke-opacity="0.55"/>
<line x1="225.4" y1="555.0" x2="227.1" y2="556.3" stroke-width="1.23" stroke-opacity="0.58"/>
<line x1="229.0" y1="557.6" x2="230.9" y2="558.9" stroke-width="1.25" stroke-opacity="0.60"/>
<line x1="232.9" y1="560.3" x2="235.0" y2="561.8" stroke-width="1.27" stroke-opacity="0.63"/>
<line x1="237.2" y1="563.3" x2="239.5" y2="564.9" stroke-width="1.29" stroke-opacity="0.65"/>
<line x1="241.9" y1="566.6" x2="244.4" y2="568.3" stroke-width="1.32" stroke-opacity="0.69"/>
<line x1="247.0" y1="570.2" x2="249.7" y2="572.1" stroke-width="1.34" stroke-opacity="0.72"/>
<line x1="252.6" y1="574.1" x2="255.6" y2="576.2" stroke-width="1.37" stroke-opacity="0.76"/>
<line x1="258.7" y1="578.4" x2="261.9" y2="580.6" stroke-width="1.40" stroke-opacity="0.80"/>
<line x1="265.3" y1="583.0" x2="268.9" y2="585.5" stroke-width="1.43" stroke-opacity="0.84"/>
<line x1="272.6" y1="588.1" x2="276.5" y2="590.8" stroke-width="1.47" stroke-opacity="0.89"/>
<line x1="280.6" y1="593.7" x2="284.8" y2="596.6" stroke-width="1.51" stroke-opacity="0.94"/>
<line x1="289.2" y1="599.7" x2="293.9" y2="603.0" stroke-width="1.55" stroke-opacity="1.00"/>
<line x1="298.7" y1="606.4" x2="303.8" y2="609.9" stroke-width="1.60" stroke-opacity="1.00"/>
<line x1="309.1" y1="613.6" x2="314.6" y2="617.5" stroke-width="1.65" stroke-opacity="1.00"/>
<line x1="320.4" y1="621.5" x2="326.4" y2="625.8" stroke-width="1.70" stroke-opacity="1.00"/>
<line x1="332.7" y1="630.2" x2="339.3" y2="634.8" stroke-width="1.77" stroke-opacity="1.00"/>
<line x1="346.2" y1="639.6" x2="353.4" y2="644.7" stroke-width="1.83" stroke-opacity="1.00"/>
<line x1="360.9" y1="649.9" x2="368.8" y2="655.4" stroke-width="1.91" stroke-opacity="1.00"/>
<line x1="377.0" y1="661.2" x2="385.6" y2="667.2" stroke-width="1.98" stroke-opacity="1.00"/>
<line x1="394.6" y1="673.5" x2="403.9" y2="680.0" stroke-width="2.07" stroke-opacity="1.00"/>
<line x1="413.7" y1="686.9" x2="424.0" y2="694.0" stroke-width="2.17" stroke-opacity="1.00"/>
<line x1="434.7" y1="701.5" x2="445.8" y2="709.3" stroke-width="2.27" stroke-opacity="1.00"/>
<line x1="457.5" y1="717.5" x2="469.7" y2="726.1" stroke-width="2.38" stroke-opacity="1.00"/>
<line x1="482.5" y1="735.0" x2="495.8" y2="744.3" stroke-width="2.51" stroke-opacity="1.00"/>
<line x1="509.7" y1="754.1" x2="524.3" y2="764.3" stroke-width="2.64" stroke-opacity="1.00"/>
<line x1="539.5" y1="774.9" x2="555.4" y2="786.0" stroke-width="2.79" stroke-opacity="1.00"/>
<line x1="572.0" y1="797.7" x2="589.4" y2="809.8" stroke-width="2.95" stroke-opacity="1.00"/>
<line x1="607.5" y1="822.5" x2="626.5" y2="835.8" stroke-width="3.13" stroke-opacity="1.00"/>
<line x1="154.8" y1="500.3" x2="156.7" y2="501.5" stroke-width="0.85" stroke-opacity="0.06"/>
<line x1="158.6" y1="502.6" x2="160.4" y2="503.8" stroke-width="0.86" stroke-opacity="0.09"/>
<line x1="162.3" y1="504.9" x2="164.2" y2="506.1" stroke-width="0.88" stroke-opacity="0.11"/>
<line x1="166.0" y1="507.2" x2="167.9" y2="508.4" stroke-width="0.90" stroke-opacity="0.13"/>
<line x1="169.8" y1="509.5" x2="171.6" y2="510.7" stroke-width="0.91" stroke-opacity="0.15"/>
<line x1="173.5" y1="511.9" x2="175.4" y2="513.0" stroke-width="0.93" stroke-opacity="0.17"/>
<line x1="177.2" y1="514.2" x2="179.1" y2="515.3" stroke-width="0.95" stroke-opacity="0.19"/>
<line x1="180.9" y1="516.5" x2="182.8" y2="517.6" stroke-width="0.96" stroke-opacity="0.22"/>
<line x1="184.7" y1="518.8" x2="186.5" y2="519.9" stroke-width="0.98" stroke-opacity="0.24"/>
<line x1="188.4" y1="521.1" x2="190.3" y2="522.3" stroke-width="1.00" stroke-opacity="0.26"/>
<line x1="192.1" y1="523.4" x2="194.0" y2="524.6" stroke-width="1.01" stroke-opacity="0.28"/>
<line x1="195.9" y1="525.7" x2="197.7" y2="526.9" stroke-width="1.03" stroke-opacity="0.30"/>
<line x1="199.6" y1="528.0" x2="201.5" y2="529.2" stroke-width="1.04" stroke-opacity="0.33"/>
<line x1="203.3" y1="530.3" x2="205.2" y2="531.5" stroke-width="1.06" stroke-opacity="0.35"/>
<line x1="207.1" y1="532.7" x2="208.9" y2="533.8" stroke-width="1.08" stroke-opacity="0.37"/>
<line x1="210.8" y1="535.0" x2="212.7" y2="536.1" stroke-width="1.09" stroke-opacity="0.39"/>
<line x1="214.5" y1="537.3" x2="216.4" y2="538.4" stroke-width="1.11" stroke-opacity="0.41"/>
<line x1="218.3" y1="539.6" x2="220.1" y2="540.7" stroke-width="1.13" stroke-opacity="0.43"/>
<line x1="222.0" y1="541.9" x2="223.8" y2="543.0" stroke-width="1.14" stroke-opacity="0.46"/>
<line x1="225.7" y1="544.2" x2="227.6" y2="545.4" stroke-width="1.16" stroke-opacity="0.48"/>
<line x1="229.4" y1="546.5" x2="231.3" y2="547.7" stroke-width="1.18" stroke-opacity="0.50"/>
<line x1="233.2" y1="548.8" x2="235.0" y2="550.0" stroke-width="1.19" stroke-opacity="0.52"/>
<line x1="236.9" y1="551.1" x2="238.8" y2="552.3" stroke-width="1.21" stroke-opacity="0.54"/>
<line x1="240.6" y1="553.4" x2="242.5" y2="554.6" stroke-width="1.23" stroke-opacity="0.57"/>
<line x1="244.5" y1="555.8" x2="246.6" y2="557.1" stroke-width="1.24" stroke-opacity="0.59"/>
<line x1="248.7" y1="558.5" x2="251.0" y2="559.9" stroke-width="1.26" stroke-opacity="0.61"/>
<line x1="253.4" y1="561.3" x2="255.8" y2="562.9" stroke-width="1.28" stroke-opacity="0.64"/>
<line x1="258.4" y1="564.5" x2="261.1" y2="566.1" stroke-width="1.30" stroke-opacity="0.67"/>
<line x1="263.9" y1="567.9" x2="266.9" y2="569.7" stroke-width="1.33" stroke-opacity="0.70"/>
<line x1="269.9" y1="571.6" x2="273.1" y2="573.6" stroke-width="1.35" stroke-opacity="0.74"/>
<line x1="276.5" y1="575.7" x2="280.0" y2="577.8" stroke-width="1.38" stroke-opacity="0.78"/>
<line x1="283.7" y1="580.1" x2="287.5" y2="582.5" stroke-width="1.42" stroke-opacity="0.82"/>
<line x1="291.5" y1="585.0" x2="295.7" y2="587.6" stroke-width="1.45" stroke-opacity="0.86"/>
<line x1="300.1" y1="590.3" x2="304.6" y2="593.1" stroke-width="1.49" stroke-opacity="0.91"/>
<line x1="309.4" y1="596.1" x2="314.4" y2="599.1" stroke-width="1.53" stroke-opacity="0.97"/>
<line x1="319.6" y1="602.4" x2="325.1" y2="605.8" stroke-width="1.57" stroke-opacity="1.00"/>
<line x1="330.8" y1="609.3" x2="336.7" y2="613.0" stroke-width="1.62" stroke-opacity="1.00"/>
<line x1="342.9" y1="616.8" x2="349.4" y2="620.8" stroke-width="1.68" stroke-opacity="1.00"/>
<line x1="356.2" y1="625.1" x2="363.3" y2="629.4" stroke-width="1.73" stroke-opacity="1.00"/>
<line x1="370.7" y1="634.0" x2="378.5" y2="638.8" stroke-width="1.80" stroke-opacity="1.00"/>
<line x1="386.6" y1="643.9" x2="395.0" y2="649.1" stroke-width="1.87" stroke-opacity="1.00"/>
<line x1="403.9" y1="654.6" x2="413.1" y2="660.3" stroke-width="1.94" stroke-opacity="1.00"/>
<line x1="422.8" y1="666.3" x2="432.9" y2="672.5" stroke-width="2.03" stroke-opacity="1.00"/>
<line x1="443.4" y1="679.1" x2="454.4" y2="685.9" stroke-width="2.12" stroke-opacity="1.00"/>
<line x1="466.0" y1="693.0" x2="478.0" y2="700.5" stroke-width="2.22" stroke-opacity="1.00"/>
<line x1="490.6" y1="708.3" x2="503.7" y2="716.4" stroke-width="2.33" stroke-opacity="1.00"/>
<line x1="517.4" y1="724.9" x2="531.8" y2="733.8" stroke-width="2.44" stroke-opacity="1.00"/>
<line x1="546.8" y1="743.1" x2="562.5" y2="752.8" stroke-width="2.57" stroke-opacity="1.00"/>
<line x1="578.8" y1="763.0" x2="596.0" y2="773.6" stroke-width="2.71" stroke-opacity="1.00"/>
<line x1="613.8" y1="784.6" x2="632.5" y2="796.2" stroke-width="2.87" stroke-opacity="1.00"/>
<line x1="160.2" y1="499.0" x2="162.3" y2="500.1" stroke-width="0.84" stroke-opacity="0.05"/>
<line x1="164.3" y1="501.3" x2="166.4" y2="502.4" stroke-width="0.86" stroke-opacity="0.07"/>
<line x1="168.5" y1="503.6" x2="170.6" y2="504.7" stroke-width="0.87" stroke-opacity="0.10"/>
<line x1="172.6" y1="505.9" x2="174.7" y2="507.0" stroke-width="0.89" stroke-opacity="0.12"/>
<line x1="176.8" y1="508.2" x2="178.8" y2="509.3" stroke-width="0.91" stroke-opacity="0.14"/>
<line x1="180.9" y1="510.5" x2="183.0" y2="511.6" stroke-width="0.92" stroke-opacity="0.16"/>
<line x1="185.1" y1="512.8" x2="187.1" y2="513.9" stroke-width="0.94" stroke-opacity="0.18"/>
<line x1="189.2" y1="515.1" x2="191.3" y2="516.2" stroke-width="0.95" stroke-opacity="0.21"/>
<line x1="193.3" y1="517.4" x2="195.4" y2="518.5" stroke-width="0.97" stroke-opacity="0.23"/>
<line x1="197.5" y1="519.7" x2="199.6" y2="520.8" stroke-width="0.99" stroke-opacity="0.25"/>
<line x1="201.6" y1="522.0" x2="203.7" y2="523.1" stroke-width="1.00" stroke-opacity="0.27"/>
<line x1="205.8" y1="524.3" x2="207.9" y2="525.4" stroke-width="1.02" stroke-opacity="0.29"/>
<line x1="209.9" y1="526.6" x2="212.0" y2="527.7" stroke-width="1.04" stroke-opacity="0.31"/>
<line x1="214.1" y1="528.9" x2="216.1" y2="530.0" stroke-width="1.05" stroke-opacity="0.34"/>
<line x1="218.2" y1="531.2" x2="220.3" y2="532.3" stroke-width="1.07" stroke-opacity="0.36"/>
<line x1="222.4" y1="533.5" x2="224.4" y2="534.6" stroke-width="1.09" stroke-opacity="0.38"/>
<line x1="226.5" y1="535.8" x2="228.6" y2="536.9" stroke-width="1.10" stroke-opacity="0.40"/>
<line x1="230.7" y1="538.1" x2="232.7" y2="539.2" stroke-width="1.12" stroke-opacity="0.42"/>
<line x1="234.8" y1="540.4" x2="236.9" y2="541.5" stroke-width="1.14" stroke-opacity="0.45"/>
<line x1="238.9" y1="542.7" x2="241.0" y2="543.8" stroke-width="1.15" stroke-opacity="0.47"/>
<line x1="243.1" y1="545.0" x2="245.2" y2="546.1" stroke-width="1.17" stroke-opacity="0.49"/>
<line x1="247.2" y1="547.3" x2="249.3" y2="548.4" stroke-width="1.18" stroke-opacity="0.51"/>
<line x1="251.4" y1="549.6" x2="253.4" y2="550.7" stroke-width="1.20" stroke-opacity="0.53"/>
<line x1="255.5" y1="551.9" x2="257.6" y2="553.0" stroke-width="1.22" stroke-opacity="0.55"/>
<line x1="259.7" y1="554.2" x2="261.9" y2="555.4" stroke-width="1.23" stroke-opacity="0.58"/>
<line x1="264.2" y1="556.7" x2="266.6" y2="558.0" stroke-width="1.25" stroke-opacity="0.60"/>
<line x1="269.1" y1="559.4" x2="271.7" y2="560.9" stroke-width="1.27" stroke-opacity="0.63"/>
<line x1="274.5" y1="562.4" x2="277.3" y2="564.0" stroke-width="1.29" stroke-opacity="0.65"/>
<line x1="280.3" y1="565.7" x2="283.5" y2="567.4" stroke-width="1.32" stroke-opacity="0.69"/>
<line x1="286.7" y1="569.2" x2="290.1" y2="571.1" stroke-width="1.34" stroke-opacity="0.72"/>
<line x1="293.7" y1="573.1" x2="297.4" y2="575.2" stroke-width="1.37" stroke-opacity="0.76"/>
<line x1="301.3" y1="577.3" x2="305.4" y2="579.6" stroke-width="1.40" stroke-opacity="0.80"/>
<line x1="309.7" y1="582.0" x2="314.1" y2="584.4" stroke-width="1.43" stroke-opacity="0.84"/>
<line x1="318.8" y1="587.0" x2="323.6" y2="589.7" stroke-width="1.47" stroke-opacity="0.89"/>
<line x1="328.7" y1="592.5" x2="334.0" y2="595.5" stroke-width="1.51" stroke-opacity="0.94"/>
<line x1="339.6" y1="598.5" x2="345.4" y2="601.8" stroke-width="1.55" stroke-opacity="1.00"/>
<line x1="351.4" y1="605.1" x2="357.7" y2="608.6" stroke-width="1.60" stroke-opacity="1.00"/>
<line x1="364.3" y1="612.3" x2="371.3" y2="616.1" stroke-width="1.65" stroke-opacity="1.00"/>
<line x1="378.5" y1="620.2" x2="386.0" y2="624.3" stroke-width="1.70" stroke-opacity="1.00"/>
<line x1="393.9" y1="628.7" x2="402.1" y2="633.3" stroke-width="1.77" stroke-opacity="1.00"/>
<line x1="410.8" y1="638.1" x2="419.8" y2="643.1" stroke-width="1.83" stroke-opacity="1.00"/>
<line x1="429.2" y1="648.3" x2="439.0" y2="653.7" stroke-width="1.91" stroke-opacity="1.00"/>
<line x1="449.3" y1="659.4" x2="460.0" y2="665.4" stroke-width="1.98" stroke-opacity="1.00"/>
<line x1="471.2" y1="671.6" x2="482.9" y2="678.1" stroke-width="2.07" stroke-opacity="1.00"/>
<line x1="495.2" y1="684.9" x2="508.0" y2="692.0" stroke-width="2.17" stroke-opacity="1.00"/>
<line x1="521.3" y1="699.4" x2="535.3" y2="707.2" stroke-width="2.27" stroke-opacity="1.00"/>
<line x1="549.9" y1="715.3" x2="565.2" y2="723.8" stroke-width="2.38" stroke-opacity="1.00"/>
<line x1="581.1" y1="732.6" x2="597.8" y2="741.9" stroke-width="2.51" stroke-opacity="1.00"/>
<line x1="615.2" y1="751.6" x2="633.4" y2="761.7" stroke-width="2.64" stroke-opacity="1.00"/>
<line x1="169.7" y1="499.9" x2="172.0" y2="501.1" stroke-width="0.85" stroke-opacity="0.06"/>
<line x1="174.2" y1="502.2" x2="176.5" y2="503.4" stroke-width="0.86" stroke-opacity="0.09"/>
<line x1="178.8" y1="504.5" x2="181.1" y2="505.7" stroke-width="0.88" stroke-opacity="0.11"/>
<line x1="183.4" y1="506.8" x2="185.6" y2="508.0" stroke-width="0.90" stroke-opacity="0.13"/>
<line x1="187.9" y1="509.1" x2="190.2" y2="510.3" stroke-width="0.91" stroke-opacity="0.15"/>
<line x1="192.5" y1="511.4" x2="194.8" y2="512.5" stroke-width="0.93" stroke-opacity="0.17"/>
<line x1="197.0" y1="513.7" x2="199.3" y2="514.8" stroke-width="0.95" stroke-opacity="0.19"/>
<line x1="201.6" y1="516.0" x2="203.9" y2="517.1" stroke-width="0.96" stroke-opacity="0.22"/>
<line x1="206.2" y1="518.3" x2="208.4" y2="519.4" stroke-width="0.98" stroke-opacity="0.24"/>
<line x1="210.7" y1="520.6" x2="213.0" y2="521.7" stroke-width="1.00" stroke-opacity="0.26"/>
<line x1="215.3" y1="522.9" x2="217.6" y2="524.0" stroke-width="1.01" stroke-opacity="0.28"/>
<line x1="219.8" y1="525.1" x2="222.1" y2="526.3" stroke-width="1.03" stroke-opacity="0.30"/>
<line x1="224.4" y1="527.4" x2="226.7" y2="528.6" stroke-width="1.04" stroke-opacity="0.33"/>
<line x1="229.0" y1="529.7" x2="231.2" y2="530.9" stroke-width="1.06" stroke-opacity="0.35"/>
<line x1="233.5" y1="532.0" x2="235.8" y2="533.2" stroke-width="1.08" stroke-opacity="0.37"/>
<line x1="238.1" y1="534.3" x2="240.4" y2="535.5" stroke-width="1.09" stroke-opacity="0.39"/>
<line x1="242.6" y1="536.6" x2="244.9" y2="537.7" stroke-width="1.11" stroke-opacity="0.41"/>
<line x1="247.2" y1="538.9" x2="249.5" y2="540.0" stroke-width="1.13" stroke-opacity="0.43"/>
<line x1="251.8" y1="541.2" x2="254.0" y2="542.3" stroke-width="1.14" stroke-opacity="0.46"/>
<line x1="256.3" y1="543.5" x2="258.6" y2="544.6" stroke-width="1.16" stroke-opacity="0.48"/>
<line x1="260.9" y1="545.8" x2="263.2" y2="546.9" stroke-width="1.18" stroke-opacity="0.50"/>
<line x1="265.4" y1="548.1" x2="267.7" y2="549.2" stroke-width="1.19" stroke-opacity="0.52"/>
<line x1="270.0" y1="550.3" x2="272.3" y2="551.5" stroke-width="1.21" stroke-opacity="0.54"/>
<line x1="274.6" y1="552.6" x2="276.9" y2="553.8" stroke-width="1.23" stroke-opacity="0.57"/>
<line x1="279.3" y1="555.0" x2="281.8" y2="556.3" stroke-width="1.24" stroke-opacity="0.59"/>
<line x1="284.5" y1="557.6" x2="287.2" y2="559.0" stroke-width="1.26" stroke-opacity="0.61"/>
<line x1="290.1" y1="560.5" x2="293.1" y2="562.0" stroke-width="1.28" stroke-opacity="0.64"/>
<line x1="296.3" y1="563.6" x2="299.6" y2="565.2" stroke-width="1.30" stroke-opacity="0.67"/>
<line x1="303.0" y1="566.9" x2="306.6" y2="568.7" stroke-width="1.33" stroke-opacity="0.70"/>
<line x1="310.4" y1="570.6" x2="314.3" y2="572.6" stroke-width="1.35" stroke-opacity="0.74"/>
<line x1="318.4" y1="574.7" x2="322.7" y2="576.8" stroke-width="1.38" stroke-opacity="0.78"/>
<line x1="327.2" y1="579.1" x2="331.8" y2="581.4" stroke-width="1.42" stroke-opacity="0.82"/>
<line x1="336.7" y1="583.9" x2="341.9" y2="586.5" stroke-width="1.45" stroke-opacity="0.86"/>
<line x1="347.2" y1="589.1" x2="352.8" y2="591.9" stroke-width="1.49" stroke-opacity="0.91"/>
<line x1="358.6" y1="594.9" x2="364.7" y2="597.9" stroke-width="1.53" stroke-opacity="0.97"/>
<line x1="371.1" y1="601.1" x2="377.8" y2="604.5" stroke-width="1.57" stroke-opacity="1.00"/>
<line x1="384.7" y1="608.0" x2="392.0" y2="611.6" stroke-width="1.62" stroke-opacity="1.00"/>
<line x1="399.6" y1="615.5" x2="407.5" y2="619.5" stroke-width="1.68" stroke-opacity="1.00"/>
<line x1="415.8" y1="623.6" x2="424.5" y2="628.0" stroke-width="1.73" stroke-opacity="1.00"/>
<line x1="433.6" y1="632.5" x2="443.0" y2="637.3" stroke-width="1.80" stroke-opacity="1.00"/>
<line x1="452.9" y1="642.3" x2="463.3" y2="647.5" stroke-width="1.87" stroke-opacity="1.00"/>
<line x1="474.1" y1="652.9" x2="485.4" y2="658.6" stroke-width="1.94" stroke-opacity="1.00"/>
<line x1="497.2" y1="664.5" x2="509.5" y2="670.7" stroke-width="2.03" stroke-opacity="1.00"/>
<line x1="522.4" y1="677.2" x2="535.9" y2="684.0" stroke-width="2.12" stroke-opacity="1.00"/>
<line x1="549.9" y1="691.0" x2="564.7" y2="698.4" stroke-width="2.22" stroke-opacity="1.00"/>
<line x1="580.0" y1="706.1" x2="596.1" y2="714.2" stroke-width="2.33" stroke-opacity="1.00"/>
<line x1="612.9" y1="722.6" x2="630.4" y2="731.5" stroke-width="2.44" stroke-opacity="1.00"/>
<line x1="174.6" y1="498.6" x2="177.1" y2="499.8" stroke-width="0.84" stroke-opacity="0.05"/>
<line x1="179.6" y1="500.9" x2="182.1" y2="502.0" stroke-width="0.86" stroke-opacity="0.07"/>
<line x1="184.6" y1="503.2" x2="187.1" y2="504.3" stroke-width="0.87" stroke-opacity="0.10"/>
<line x1="189.5" y1="505.5" x2="192.0" y2="506.6" stroke-width="0.89" stroke-opacity="0.12"/>
<line x1="194.5" y1="507.8" x2="197.0" y2="508.9" stroke-width="0.91" stroke-opacity="0.14"/>
<line x1="199.5" y1="510.0" x2="202.0" y2="511.2" stroke-width="0.92" stroke-opacity="0.16"/>
<line x1="204.5" y1="512.3" x2="207.0" y2="513.5" stroke-width="0.94" stroke-opacity="0.18"/>
<line x1="209.4" y1="514.6" x2="211.9" y2="515.7" stroke-width="0.95" stroke-opacity="0.21"/>
<line x1="214.4" y1="516.9" x2="216.9" y2="518.0" stroke-width="0.97" stroke-opacity="0.23"/>
<line x1="219.4" y1="519.2" x2="221.9" y2="520.3" stroke-width="0.99" stroke-opacity="0.25"/>
<line x1="224.4" y1="521.4" x2="226.9" y2="522.6" stroke-width="1.00" stroke-opacity="0.27"/>
<line x1="229.3" y1="523.7" x2="231.8" y2="524.9" stroke-width="1.02" stroke-opacity="0.29"/>
<line x1="234.3" y1="526.0" x2="236.8" y2="527.1" stroke-width="1.04" stroke-opacity="0.31"/>
<line x1="239.3" y1="528.3" x2="241.8" y2="529.4" stroke-width="1.05" stroke-opacity="0.34"/>
<line x1="244.3" y1="530.6" x2="246.7" y2="531.7" stroke-width="1.07" stroke-opacity="0.36"/>
<line x1="249.2" y1="532.8" x2="251.7" y2="534.0" stroke-width="1.09" stroke-opacity="0.38"/>
<line x1="254.2" y1="535.1" x2="256.7" y2="536.3" stroke-width="1.10" stroke-opacity="0.40"/>
<line x1="259.2" y1="537.4" x2="261.7" y2="538.5" stroke-width="1.12" stroke-opacity="0.42"/>
<line x1="264.2" y1="539.7" x2="266.6" y2="540.8" stroke-width="1.14" stroke-opacity="0.45"/>
<line x1="269.1" y1="542.0" x2="271.6" y2="543.1" stroke-width="1.15" stroke-opacity="0.47"/>
<line x1="274.1" y1="544.2" x2="276.6" y2="545.4" stroke-width="1.17" stroke-opacity="0.49"/>
<line x1="279.1" y1="546.5" x2="281.6" y2="547.7" stroke-width="1.18" stroke-opacity="0.51"/>
<line x1="284.0" y1="548.8" x2="286.5" y2="550.0" stroke-width="1.20" stroke-opacity="0.53"/>
<line x1="289.0" y1="551.1" x2="291.5" y2="552.2" stroke-width="1.22" stroke-opacity="0.55"/>
<line x1="294.0" y1="553.4" x2="296.7" y2="554.6" stroke-width="1.23" stroke-opacity="0.58"/>
<line x1="299.4" y1="555.9" x2="302.3" y2="557.2" stroke-width="1.25" stroke-opacity="0.60"/>
<line x1="305.3" y1="558.6" x2="308.5" y2="560.0" stroke-width="1.27" stroke-opacity="0.63"/>
<line x1="311.8" y1="561.5" x2="315.2" y2="563.1" stroke-width="1.29" stroke-opacity="0.65"/>
<line x1="318.8" y1="564.7" x2="322.6" y2="566.5" stroke-width="1.32" stroke-opacity="0.69"/>
<line x1="326.5" y1="568.3" x2="330.6" y2="570.1" stroke-width="1.34" stroke-opacity="0.72"/>
<line x1="334.9" y1="572.1" x2="339.3" y2="574.2" stroke-width="1.37" stroke-opacity="0.76"/>
<line x1="344.0" y1="576.3" x2="348.9" y2="578.6" stroke-width="1.40" stroke-opacity="0.80"/>
<line x1="354.0" y1="580.9" x2="359.4" y2="583.3" stroke-width="1.43" stroke-opacity="0.84"/>
<line x1="364.9" y1="585.9" x2="370.8" y2="588.6" stroke-width="1.47" stroke-opacity="0.89"/>
<line x1="376.9" y1="591.4" x2="383.2" y2="594.3" stroke-width="1.51" stroke-opacity="0.94"/>
<line x1="389.9" y1="597.3" x2="396.8" y2="600.5" stroke-width="1.55" stroke-opacity="1.00"/>
<line x1="404.1" y1="603.9" x2="411.7" y2="607.3" stroke-width="1.60" stroke-opacity="1.00"/>
<line x1="419.6" y1="611.0" x2="427.9" y2="614.8" stroke-width="1.65" stroke-opacity="1.00"/>
<line x1="436.6" y1="618.8" x2="445.6" y2="622.9" stroke-width="1.70" stroke-opacity="1.00"/>
<line x1="455.1" y1="627.3" x2="465.0" y2="631.8" stroke-width="1.77" stroke-opacity="1.00"/>
<line x1="475.3" y1="636.5" x2="486.1" y2="641.5" stroke-width="1.83" stroke-opacity="1.00"/>
<line x1="497.4" y1="646.7" x2="509.2" y2="652.1" stroke-width="1.91" stroke-opacity="1.00"/>
<line x1="521.5" y1="657.7" x2="534.4" y2="663.6" stroke-width="1.98" stroke-opacity="1.00"/>
<line x1="547.8" y1="669.8" x2="561.9" y2="676.2" stroke-width="2.07" stroke-opacity="1.00"/>
<line x1="576.6" y1="683.0" x2="591.9" y2="690.0" stroke-width="2.17" stroke-opacity="1.00"/>
<line x1="608.0" y1="697.4" x2="624.8" y2="705.1" stroke-width="2.27" stroke-opacity="1.00"/>
<line x1="184.5" y1="499.6" x2="187.2" y2="500.7" stroke-width="0.85" stroke-opacity="0.06"/>
<line x1="189.9" y1="501.9" x2="192.6" y2="503.0" stroke-width="0.86" stroke-opacity="0.09"/>
<line x1="195.3" y1="504.1" x2="198.0" y2="505.3" stroke-width="0.88" stroke-opacity="0.11"/>
<line x1="200.7" y1="506.4" x2="203.4" y2="507.5" stroke-width="0.90" stroke-opacity="0.13"/>
<line x1="206.1" y1="508.7" x2="208.8" y2="509.8" stroke-width="0.91" stroke-opacity="0.15"/>
<line x1="211.5" y1="510.9" x2="214.2" y2="512.1" stroke-width="0.93" stroke-opacity="0.17"/>
<line x1="216.9" y1="513.2" x2="219.6" y2="514.4" stroke-width="0.95" stroke-opacity="0.19"/>
<line x1="222.3" y1="515.5" x2="225.0" y2="516.6" stroke-width="0.96" stroke-opacity="0.22"/>
<line x1="227.6" y1="517.8" x2="230.3" y2="518.9" stroke-width="0.98" stroke-opacity="0.24"/>
<line x1="233.0" y1="520.0" x2="235.7" y2="521.2" stroke-width="1.00" stroke-opacity="0.26"/>
<line x1="238.4" y1="522.3" x2="241.1" y2="523.4" stroke-width="1.01" stroke-opacity="0.28"/>
<line x1="243.8" y1="524.6" x2="246.5" y2="525.7" stroke-width="1.03" stroke-opacity="0.30"/>
<line x1="249.2" y1="526.8" x2="251.9" y2="528.0" stroke-width="1.04" stroke-opacity="0.33"/>
<line x1="254.6" y1="529.1" x2="257.3" y2="530.2" stroke-width="1.06" stroke-opacity="0.35"/>
<line x1="260.0" y1="531.4" x2="262.7" y2="532.5" stroke-width="1.08" stroke-opacity="0.37"/>
<line x1="265.4" y1="533.7" x2="268.1" y2="534.8" stroke-width="1.09" stroke-opacity="0.39"/>
<line x1="270.8" y1="535.9" x2="273.4" y2="537.1" stroke-width="1.11" stroke-opacity="0.41"/>
<line x1="276.1" y1="538.2" x2="278.8" y2="539.3" stroke-width="1.13" stroke-opacity="0.43"/>
<line x1="281.5" y1="540.5" x2="284.2" y2="541.6" stroke-width="1.14" stroke-opacity="0.46"/>
<line x1="286.9" y1="542.7" x2="289.6" y2="543.9" stroke-width="1.16" stroke-opacity="0.48"/>
<line x1="292.3" y1="545.0" x2="295.0" y2="546.1" stroke-width="1.18" stroke-opacity="0.50"/>
<line x1="297.7" y1="547.3" x2="300.4" y2="548.4" stroke-width="1.19" stroke-opacity="0.52"/>
<line x1="303.1" y1="549.6" x2="305.8" y2="550.7" stroke-width="1.21" stroke-opacity="0.54"/>
<line x1="308.5" y1="551.8" x2="311.2" y2="553.0" stroke-width="1.23" stroke-opacity="0.57"/>
<line x1="314.1" y1="554.2" x2="317.1" y2="555.4" stroke-width="1.24" stroke-opacity="0.59"/>
<line x1="320.2" y1="556.8" x2="323.4" y2="558.1" stroke-width="1.26" stroke-opacity="0.61"/>
<line x1="326.9" y1="559.6" x2="330.4" y2="561.1" stroke-width="1.28" stroke-opacity="0.64"/>
<line x1="334.1" y1="562.6" x2="338.0" y2="564.3" stroke-width="1.30" stroke-opacity="0.67"/>
<line x1="342.1" y1="566.0" x2="346.3" y2="567.8" stroke-width="1.33" stroke-opacity="0.70"/>
<line x1="350.8" y1="569.7" x2="355.4" y2="571.6" stroke-width="1.35" stroke-opacity="0.74"/>
<line x1="360.3" y1="573.7" x2="365.4" y2="575.8" stroke-width="1.38" stroke-opacity="0.78"/>
<line x1="370.6" y1="578.0" x2="376.2" y2="580.4" stroke-width="1.42" stroke-opacity="0.82"/>
<line x1="382.0" y1="582.8" x2="388.0" y2="585.4" stroke-width="1.45" stroke-opacity="0.86"/>
<line x1="394.3" y1="588.0" x2="400.9" y2="590.8" stroke-width="1.49" stroke-opacity="0.91"/>
<line x1="407.8" y1="593.7" x2="415.0" y2="596.7" stroke-width="1.53" stroke-opacity="0.97"/>
<line x1="422.6" y1="599.9" x2="430.4" y2="603.2" stroke-width="1.57" stroke-opacity="1.00"/>
<line x1="438.7" y1="606.7" x2="447.3" y2="610.3" stroke-width="1.62" stroke-opacity="1.00"/>
<line x1="456.2" y1="614.1" x2="465.6" y2="618.1" stroke-width="1.68" stroke-opacity="1.00"/>
<line x1="475.4" y1="622.2" x2="485.7" y2="626.5" stroke-width="1.73" stroke-opacity="1.00"/>
<line x1="496.4" y1="631.0" x2="507.6" y2="635.8" stroke-width="1.80" stroke-opacity="1.00"/>
<line x1="519.3" y1="640.7" x2="531.5" y2="645.8" stroke-width="1.87" stroke-opacity="1.00"/>
<line x1="544.3" y1="651.2" x2="557.6" y2="656.8" stroke-width="1.94" stroke-opacity="1.00"/>
<line x1="571.6" y1="662.7" x2="586.2" y2="668.9" stroke-width="2.03" stroke-opacity="1.00"/>
<line x1="601.4" y1="675.3" x2="617.3" y2="682.0" stroke-width="2.12" stroke-opacity="1.00"/>
<line x1="633.9" y1="689.0" x2="651.3" y2="696.3" stroke-width="2.22" stroke-opacity="1.00"/>
<line x1="189.1" y1="498.3" x2="192.0" y2="499.4" stroke-width="0.84" stroke-opacity="0.05"/>
<line x1="194.9" y1="500.5" x2="197.8" y2="501.7" stroke-width="0.86" stroke-opacity="0.07"/>
<line x1="200.7" y1="502.8" x2="203.6" y2="503.9" stroke-width="0.87" stroke-opacity="0.10"/>
<line x1="206.5" y1="505.1" x2="209.4" y2="506.2" stroke-width="0.89" stroke-opacity="0.12"/>
<line x1="212.3" y1="507.3" x2="215.2" y2="508.5" stroke-width="0.91" stroke-opacity="0.14"/>
<line x1="218.1" y1="509.6" x2="221.0" y2="510.7" stroke-width="0.92" stroke-opacity="0.16"/>
<line x1="223.9" y1="511.8" x2="226.8" y2="513.0" stroke-width="0.94" stroke-opacity="0.18"/>
<line x1="229.7" y1="514.1" x2="232.6" y2="515.2" stroke-width="0.95" stroke-opacity="0.21"/>
<line x1="235.5" y1="516.4" x2="238.4" y2="517.5" stroke-width="0.97" stroke-opacity="0.23"/>
<line x1="241.3" y1="518.6" x2="244.2" y2="519.8" stroke-width="0.99" stroke-opacity="0.25"/>
<line x1="247.1" y1="520.9" x2="250.0" y2="522.0" stroke-width="1.00" stroke-opacity="0.27"/>
<line x1="252.9" y1="523.2" x2="255.8" y2="524.3" stroke-width="1.02" stroke-opacity="0.29"/>
<line x1="258.7" y1="525.4" x2="261.6" y2="526.5" stroke-width="1.04" stroke-opacity="0.31"/>
<line x1="264.5" y1="527.7" x2="267.4" y2="528.8" stroke-width="1.05" stroke-opacity="0.34"/>
<line x1="270.3" y1="529.9" x2="273.2" y2="531.1" stroke-width="1.07" stroke-opacity="0.36"/>
<line x1="276.1" y1="532.2" x2="279.0" y2="533.3" stroke-width="1.09" stroke-opacity="0.38"/>
<line x1="281.9" y1="534.5" x2="284.8" y2="535.6" stroke-width="1.10" stroke-opacity="0.40"/>
<line x1="287.7" y1="536.7" x2="290.6" y2="537.9" stroke-width="1.12" stroke-opacity="0.42"/>
<line x1="293.5" y1="539.0" x2="296.4" y2="540.1" stroke-width="1.14" stroke-opacity="0.45"/>
<line x1="299.3" y1="541.2" x2="302.2" y2="542.4" stroke-width="1.15" stroke-opacity="0.47"/>
<line x1="305.1" y1="543.5" x2="308.0" y2="544.6" stroke-width="1.17" stroke-opacity="0.49"/>
<line x1="310.9" y1="545.8" x2="313.8" y2="546.9" stroke-width="1.18" stroke-opacity="0.51"/>
<line x1="316.7" y1="548.0" x2="319.6" y2="549.2" stroke-width="1.20" stroke-opacity="0.53"/>
<line x1="322.5" y1="550.3" x2="325.4" y2="551.4" stroke-width="1.22" stroke-opacity="0.55"/>
<line x1="328.4" y1="552.6" x2="331.5" y2="553.8" stroke-width="1.23" stroke-opacity="0.58"/>
<line x1="334.7" y1="555.0" x2="338.0" y2="556.3" stroke-width="1.25" stroke-opacity="0.60"/>
<line x1="341.6" y1="557.7" x2="345.2" y2="559.1" stroke-width="1.27" stroke-opacity="0.63"/>
<line x1="349.1" y1="560.6" x2="353.1" y2="562.2" stroke-width="1.29" stroke-opacity="0.65"/>
<line x1="357.3" y1="563.8" x2="361.6" y2="565.5" stroke-width="1.32" stroke-opacity="0.69"/>
<line x1="366.2" y1="567.3" x2="371.0" y2="569.2" stroke-width="1.34" stroke-opacity="0.72"/>
<line x1="376.0" y1="571.1" x2="381.2" y2="573.2" stroke-width="1.37" stroke-opacity="0.76"/>
<line x1="386.7" y1="575.3" x2="392.4" y2="577.5" stroke-width="1.40" stroke-opacity="0.80"/>
<line x1="398.3" y1="579.8" x2="404.6" y2="582.3" stroke-width="1.43" stroke-opacity="0.84"/>
<line x1="411.1" y1="584.8" x2="417.9" y2="587.5" stroke-width="1.47" stroke-opacity="0.89"/>
<line x1="425.0" y1="590.2" x2="432.4" y2="593.1" stroke-width="1.51" stroke-opacity="0.94"/>
<line x1="440.2" y1="596.1" x2="448.3" y2="599.3" stroke-width="1.55" stroke-opacity="1.00"/>
<line x1="456.8" y1="602.6" x2="465.6" y2="606.1" stroke-width="1.60" stroke-opacity="1.00"/>
<line x1="474.9" y1="609.7" x2="484.6" y2="613.4" stroke-width="1.65" stroke-opacity="1.00"/>
<line x1="494.7" y1="617.4" x2="505.2" y2="621.5" stroke-width="1.70" stroke-opacity="1.00"/>
<line x1="516.3" y1="625.8" x2="527.8" y2="630.3" stroke-width="1.77" stroke-opacity="1.00"/>
<line x1="539.9" y1="635.0" x2="552.5" y2="639.9" stroke-width="1.83" stroke-opacity="1.00"/>
<line x1="565.6" y1="645.0" x2="579.4" y2="650.4" stroke-width="1.91" stroke-opacity="1.00"/>
<line x1="593.8" y1="656.0" x2="608.8" y2="661.8" stroke-width="1.98" stroke-opacity="1.00"/>
<line x1="624.5" y1="668.0" x2="640.9" y2="674.4" stroke-width="2.07" stroke-opacity="1.00"/>
<line x1="199.4" y1="499.2" x2="202.5" y2="500.4" stroke-width="0.85" stroke-opacity="0.06"/>
<line x1="205.6" y1="501.5" x2="208.7" y2="502.6" stroke-width="0.86" stroke-opacity="0.09"/>
<line x1="211.8" y1="503.7" x2="214.9" y2="504.9" stroke-width="0.88" stroke-opacity="0.11"/>
<line x1="218.0" y1="506.0" x2="221.2" y2="507.1" stroke-width="0.90" stroke-opacity="0.13"/>
<line x1="224.3" y1="508.2" x2="227.4" y2="509.4" stroke-width="0.91" stroke-opacity="0.15"/>
<line x1="230.5" y1="510.5" x2="233.6" y2="511.6" stroke-width="0.93" stroke-opacity="0.17"/>
<line x1="236.7" y1="512.7" x2="239.8" y2="513.9" stroke-width="0.95" stroke-opacity="0.19"/>
<line x1="242.9" y1="515.0" x2="246.0" y2="516.1" stroke-width="0.96" stroke-opacity="0.22"/>
<line x1="249.1" y1="517.2" x2="252.2" y2="518.4" stroke-width="0.98" stroke-opacity="0.24"/>
<line x1="255.3" y1="519.5" x2="258.5" y2="520.6" stroke-width="1.00" stroke-opacity="0.26"/>
<line x1="261.6" y1="521.7" x2="264.7" y2="522.9" stroke-width="1.01" stroke-opacity="0.28"/>
<line x1="267.8" y1="524.0" x2="270.9" y2="525.1" stroke-width="1.03" stroke-opacity="0.30"/>
<line x1="274.0" y1="526.3" x2="277.1" y2="527.4" stroke-width="1.04" stroke-opacity="0.33"/>
<line x1="280.2" y1="528.5" x2="283.3" y2="529.6" stroke-width="1.06" stroke-opacity="0.35"/>
<line x1="286.4" y1="530.8" x2="289.5" y2="531.9" stroke-width="1.08" stroke-opacity="0.37"/>
<line x1="292.6" y1="533.0" x2="295.8" y2="534.1" stroke-width="1.09" stroke-opacity="0.39"/>
<line x1="298.9" y1="535.3" x2="302.0" y2="536.4" stroke-width="1.11" stroke-opacity="0.41"/>
<line x1="305.1" y1="537.5" x2="308.2" y2="538.6" stroke-width="1.13" stroke-opacity="0.43"/>
<line x1="311.3" y1="539.8" x2="314.4" y2="540.9" stroke-width="1.14" stroke-opacity="0.46"/>
<line x1="317.5" y1="542.0" x2="320.6" y2="543.1" stroke-width="1.16" stroke-opacity="0.48"/>
<line x1="323.7" y1="544.3" x2="326.8" y2="545.4" stroke-width="1.18" stroke-opacity="0.50"/>
<line x1="330.0" y1="546.5" x2="333.1" y2="547.6" stroke-width="1.19" stroke-opacity="0.52"/>
<line x1="336.2" y1="548.8" x2="339.3" y2="549.9" stroke-width="1.21" stroke-opacity="0.54"/>
<line x1="342.4" y1="551.0" x2="345.5" y2="552.2" stroke-width="1.23" stroke-opacity="0.57"/>
<line x1="348.8" y1="553.4" x2="352.3" y2="554.6" stroke-width="1.24" stroke-opacity="0.59"/>
<line x1="355.9" y1="555.9" x2="359.7" y2="557.3" stroke-width="1.26" stroke-opacity="0.61"/>
<line x1="363.6" y1="558.7" x2="367.7" y2="560.2" stroke-width="1.28" stroke-opacity="0.64"/>
<line x1="372.0" y1="561.7" x2="376.5" y2="563.4" stroke-width="1.30" stroke-opacity="0.67"/>
<line x1="381.2" y1="565.1" x2="386.1" y2="566.8" stroke-width="1.33" stroke-opacity="0.70"/>
<line x1="391.2" y1="568.7" x2="396.6" y2="570.6" stroke-width="1.35" stroke-opacity="0.74"/>
<line x1="402.2" y1="572.7" x2="408.0" y2="574.8" stroke-width="1.38" stroke-opacity="0.78"/>
<line x1="414.1" y1="577.0" x2="420.5" y2="579.3" stroke-width="1.42" stroke-opacity="0.82"/>
<line x1="427.2" y1="581.7" x2="434.2" y2="584.3" stroke-width="1.45" stroke-opacity="0.86"/>
<line x1="441.5" y1="586.9" x2="449.1" y2="589.6" stroke-width="1.49" stroke-opacity="0.91"/>
<line x1="457.0" y1="592.5" x2="465.3" y2="595.5" stroke-width="1.53" stroke-opacity="0.97"/>
<line x1="474.0" y1="598.7" x2="483.1" y2="602.0" stroke-width="1.57" stroke-opacity="1.00"/>
<line x1="492.6" y1="605.4" x2="502.5" y2="609.0" stroke-width="1.62" stroke-opacity="1.00"/>
<line x1="512.9" y1="612.8" x2="523.7" y2="616.7" stroke-width="1.68" stroke-opacity="1.00"/>
<line x1="535.0" y1="620.8" x2="546.9" y2="625.1" stroke-width="1.73" stroke-opacity="1.00"/>
<line x1="559.2" y1="629.5" x2="572.1" y2="634.2" stroke-width="1.80" stroke-opacity="1.00"/>
<line x1="585.6" y1="639.1" x2="599.7" y2="644.2" stroke-width="1.87" stroke-opacity="1.00"/>
<line x1="614.5" y1="649.5" x2="629.9" y2="655.1" stroke-width="1.94" stroke-opacity="1.00"/>
<line x1="203.5" y1="497.9" x2="206.8" y2="499.1" stroke-width="0.84" stroke-opacity="0.05"/>
<line x1="210.1" y1="500.2" x2="213.4" y2="501.3" stroke-width="0.86" stroke-opacity="0.07"/>
<line x1="216.8" y1="502.4" x2="220.1" y2="503.5" stroke-width="0.87" stroke-opacity="0.10"/>
<line x1="223.4" y1="504.7" x2="226.7" y2="505.8" stroke-width="0.89" stroke-opacity="0.12"/>
<line x1="230.0" y1="506.9" x2="233.3" y2="508.0" stroke-width="0.91" stroke-opacity="0.14"/>
<line x1="236.7" y1="509.1" x2="240.0" y2="510.3" stroke-width="0.92" stroke-opacity="0.16"/>
<line x1="243.3" y1="511.4" x2="246.6" y2="512.5" stroke-width="0.94" stroke-opacity="0.18"/>
<line x1="249.9" y1="513.6" x2="253.2" y2="514.7" stroke-width="0.95" stroke-opacity="0.21"/>
<line x1="256.6" y1="515.9" x2="259.9" y2="517.0" stroke-width="0.97" stroke-opacity="0.23"/>
<line x1="263.2" y1="518.1" x2="266.5" y2="519.2" stroke-width="0.99" stroke-opacity="0.25"/>
<line x1="269.8" y1="520.4" x2="273.1" y2="521.5" stroke-width="1.00" stroke-opacity="0.27"/>
<line x1="276.5" y1="522.6" x2="279.8" y2="523.7" stroke-width="1.02" stroke-opacity="0.29"/>
<line x1="283.1" y1="524.8" x2="286.4" y2="526.0" stroke-width="1.04" stroke-opacity="0.31"/>
<line x1="289.7" y1="527.1" x2="293.0" y2="528.2" stroke-width="1.05" stroke-opacity="0.34"/>
<line x1="296.3" y1="529.3" x2="299.7" y2="530.4" stroke-width="1.07" stroke-opacity="0.36"/>
<line x1="303.0" y1="531.6" x2="306.3" y2="532.7" stroke-width="1.09" stroke-opacity="0.38"/>
<line x1="309.6" y1="533.8" x2="312.9" y2="534.9" stroke-width="1.10" stroke-opacity="0.40"/>
<line x1="316.2" y1="536.0" x2="319.6" y2="537.2" stroke-width="1.12" stroke-opacity="0.42"/>
<line x1="322.9" y1="538.3" x2="326.2" y2="539.4" stroke-width="1.14" stroke-opacity="0.45"/>
<line x1="329.5" y1="540.5" x2="332.8" y2="541.6" stroke-width="1.15" stroke-opacity="0.47"/>
<line x1="336.1" y1="542.8" x2="339.5" y2="543.9" stroke-width="1.17" stroke-opacity="0.49"/>
<line x1="342.8" y1="545.0" x2="346.1" y2="546.1" stroke-width="1.18" stroke-opacity="0.51"/>
<line x1="349.4" y1="547.2" x2="352.7" y2="548.4" stroke-width="1.20" stroke-opacity="0.53"/>
<line x1="356.0" y1="549.5" x2="359.3" y2="550.6" stroke-width="1.22" stroke-opacity="0.55"/>
<line x1="362.7" y1="551.7" x2="366.2" y2="552.9" stroke-width="1.23" stroke-opacity="0.58"/>
<line x1="369.9" y1="554.2" x2="373.8" y2="555.5" stroke-width="1.25" stroke-opacity="0.60"/>
<line x1="377.8" y1="556.8" x2="382.0" y2="558.3" stroke-width="1.27" stroke-opacity="0.63"/>
<line x1="386.4" y1="559.7" x2="390.9" y2="561.3" stroke-width="1.29" stroke-opacity="0.65"/>
<line x1="395.7" y1="562.9" x2="400.7" y2="564.6" stroke-width="1.32" stroke-opacity="0.69"/>
<line x1="406.0" y1="566.4" x2="411.4" y2="568.2" stroke-width="1.34" stroke-opacity="0.72"/>
<line x1="417.1" y1="570.1" x2="423.1" y2="572.2" stroke-width="1.37" stroke-opacity="0.76"/>
<line x1="429.4" y1="574.3" x2="435.9" y2="576.5" stroke-width="1.40" stroke-opacity="0.80"/>
<line x1="442.7" y1="578.8" x2="449.8" y2="581.2" stroke-width="1.43" stroke-opacity="0.84"/>
<line x1="457.2" y1="583.7" x2="465.0" y2="586.3" stroke-width="1.47" stroke-opacity="0.89"/>
<line x1="473.1" y1="589.1" x2="481.6" y2="591.9" stroke-width="1.51" stroke-opacity="0.94"/>
<line x1="490.5" y1="594.9" x2="499.8" y2="598.1" stroke-width="1.55" stroke-opacity="1.00"/>
<line x1="509.5" y1="601.3" x2="519.6" y2="604.8" stroke-width="1.60" stroke-opacity="1.00"/>
<line x1="530.2" y1="608.3" x2="541.2" y2="612.1" stroke-width="1.65" stroke-opacity="1.00"/>
<line x1="552.8" y1="616.0" x2="564.8" y2="620.1" stroke-width="1.70" stroke-opacity="1.00"/>
<line x1="577.5" y1="624.3" x2="590.6" y2="628.8" stroke-width="1.77" stroke-opacity="1.00"/>
<line x1="604.4" y1="633.4" x2="618.8" y2="638.3" stroke-width="1.83" stroke-opacity="1.00"/>
<line x1="633.9" y1="643.4" x2="649.6" y2="648.7" stroke-width="1.91" stroke-opacity="1.00"/>
<line x1="214.2" y1="498.9" x2="217.8" y2="500.0" stroke-width="0.85" stroke-opacity="0.06"/>
<line x1="221.3" y1="501.1" x2="224.8" y2="502.2" stroke-width="0.86" stroke-opacity="0.09"/>
<line x1="228.3" y1="503.3" x2="231.9" y2="504.5" stroke-width="0.88" stroke-opacity="0.11"/>
<line x1="235.4" y1="505.6" x2="238.9" y2="506.7" stroke-width="0.90" stroke-opacity="0.13"/>
<line x1="242.4" y1="507.8" x2="246.0" y2="508.9" stroke-width="0.91" stroke-opacity="0.15"/>
<line x1="249.5" y1="510.0" x2="253.0" y2="511.2" stroke-width="0.93" stroke-opacity="0.17"/>
<line x1="256.5" y1="512.3" x2="260.0" y2="513.4" stroke-width="0.95" stroke-opacity="0.19"/>
<line x1="263.6" y1="514.5" x2="267.1" y2="515.6" stroke-width="0.96" stroke-opacity="0.22"/>
<line x1="270.6" y1="516.7" x2="274.1" y2="517.8" stroke-width="0.98" stroke-opacity="0.24"/>
<line x1="277.7" y1="519.0" x2="281.2" y2="520.1" stroke-width="1.00" stroke-opacity="0.26"/>
<line x1="284.7" y1="521.2" x2="288.2" y2="522.3" stroke-width="1.01" stroke-opacity="0.28"/>
<line x1="291.8" y1="523.4" x2="295.3" y2="524.5" stroke-width="1.03" stroke-opacity="0.30"/>
<line x1="298.8" y1="525.7" x2="302.3" y2="526.8" stroke-width="1.04" stroke-opacity="0.33"/>
<line x1="305.8" y1="527.9" x2="309.4" y2="529.0" stroke-width="1.06" stroke-opacity="0.35"/>
<line x1="312.9" y1="530.1" x2="316.4" y2="531.2" stroke-width="1.08" stroke-opacity="0.37"/>
<line x1="319.9" y1="532.4" x2="323.5" y2="533.5" stroke-width="1.09" stroke-opacity="0.39"/>
<line x1="327.0" y1="534.6" x2="330.5" y2="535.7" stroke-width="1.11" stroke-opacity="0.41"/>
<line x1="334.0" y1="536.8" x2="337.6" y2="537.9" stroke-width="1.13" stroke-opacity="0.43"/>
<line x1="341.1" y1="539.0" x2="344.6" y2="540.2" stroke-width="1.14" stroke-opacity="0.46"/>
<line x1="348.1" y1="541.3" x2="351.6" y2="542.4" stroke-width="1.16" stroke-opacity="0.48"/>
<line x1="355.2" y1="543.5" x2="358.7" y2="544.6" stroke-width="1.18" stroke-opacity="0.50"/>
<line x1="362.2" y1="545.7" x2="365.7" y2="546.9" stroke-width="1.19" stroke-opacity="0.52"/>
<line x1="369.3" y1="548.0" x2="372.8" y2="549.1" stroke-width="1.21" stroke-opacity="0.54"/>
<line x1="376.3" y1="550.2" x2="379.9" y2="551.3" stroke-width="1.23" stroke-opacity="0.57"/>
<line x1="383.6" y1="552.5" x2="387.5" y2="553.8" stroke-width="1.24" stroke-opacity="0.59"/>
<line x1="391.6" y1="555.1" x2="395.9" y2="556.4" stroke-width="1.26" stroke-opacity="0.61"/>
<line x1="400.3" y1="557.8" x2="405.0" y2="559.3" stroke-width="1.28" stroke-opacity="0.64"/>
<line x1="409.9" y1="560.8" x2="415.0" y2="562.4" stroke-width="1.30" stroke-opacity="0.67"/>
<line x1="420.3" y1="564.1" x2="425.8" y2="565.9" stroke-width="1.33" stroke-opacity="0.70"/>
<line x1="431.6" y1="567.7" x2="437.7" y2="569.7" stroke-width="1.35" stroke-opacity="0.74"/>
<line x1="444.1" y1="571.7" x2="450.7" y2="573.8" stroke-width="1.38" stroke-opacity="0.78"/>
<line x1="457.6" y1="576.0" x2="464.9" y2="578.2" stroke-width="1.42" stroke-opacity="0.82"/>
<line x1="472.4" y1="580.6" x2="480.3" y2="583.1" stroke-width="1.45" stroke-opacity="0.86"/>
<line x1="488.6" y1="585.8" x2="497.2" y2="588.5" stroke-width="1.49" stroke-opacity="0.91"/>
<line x1="506.2" y1="591.4" x2="515.7" y2="594.3" stroke-width="1.53" stroke-opacity="0.97"/>
<line x1="525.5" y1="597.5" x2="535.8" y2="600.7" stroke-width="1.57" stroke-opacity="1.00"/>
<line x1="546.6" y1="604.1" x2="557.8" y2="607.7" stroke-width="1.62" stroke-opacity="1.00"/>
<line x1="569.5" y1="611.4" x2="581.8" y2="615.3" stroke-width="1.68" stroke-opacity="1.00"/>
<line x1="594.6" y1="619.4" x2="608.0" y2="623.6" stroke-width="1.73" stroke-opacity="1.00"/>
<line x1="622.1" y1="628.0" x2="636.7" y2="632.7" stroke-width="1.80" stroke-opacity="1.00"/>
<line x1="1232.3" y1="821.3" x2="1274.4" y2="834.6" stroke-width="3.22" stroke-opacity="1.00"/>
</g>
<g stroke="#8c6246" stroke-opacity="0.55" stroke-width="1.6"><path d="M1238 560 L1255 566 M1238 600 L1255 606 M1238 640 L1255 647 M1238 690 L1255 697 M1238 740 L1255 748 M1238 795 L1255 803 M1238 850 L1255 858"/></g>
<!-- horizon magenta lines -->
<g stroke="#b010b0">
<path d="M0 474 H148 M333 474 H638 M1238 474 H1255" stroke-width="3.2"/>
<path d="M0 478 H148 M333 478 H638 M1238 478 H1255" stroke-width="1.4"/>
<path d="M0 480.8 H148 M333 480.8 H638 M1238 482 H1255" stroke-width="1.4"/>
<path d="M0 489 H148 M333 489 H638" stroke-width="1.5"/>
</g>
<g stroke="#e020e0" stroke-width="1.3">
<line x1="0" y1="513" x2="148" y2="512"/><line x1="333" y1="511" x2="638" y2="510"/><line x1="1238" y1="514.5" x2="1255" y2="514.5"/><line x1="1238" y1="620" x2="1255" y2="620" stroke-width="0.8"/>
<line x1="0" y1="609" x2="168" y2="606"/><line x1="312" y1="601" x2="638" y2="600"/>
<line x1="526" y1="757" x2="526" y2="877"/>
</g>
<!-- floor shadow -->
<path d="M344 775 L475 771 L486 780 L496 768 L524 766 L534 761 L557 759 L588 772 L626 794 L640 800 L640 877 L620 877 L616 863 L550 824 L514 801 L506 799 L345 810 Z" fill="#040201"/>
<!-- right leg brown under beam -->
<path d="M674 245 L733 245 L733 308 L674 308 Z" fill="url(#brownG)"/>
<!-- right leg white -->
<path d="M706 92 Q712 88 720 90 L865 108 Q880 112 886 130 L886 308 L730 308 L730 240 Z" fill="#f2f0f1"/>
<path d="M733 100 Q742 150 738 308" stroke="#dedada" stroke-width="7" fill="none"/>
<path d="M806 101 Q826 120 826 170 L822 308" stroke="#1a1a1a" stroke-width="2.5" fill="none"/>
<!-- right shadow ellipse + ball -->
<ellipse cx="852" cy="214" rx="24" ry="48" transform="rotate(-8 852 214)" fill="#bd9382"/>
<circle cx="874" cy="158" r="34" fill="url(#ballG)"/>
<path d="M842 152 Q875 150 906 156" stroke="#f0ece0" stroke-width="2.2" fill="none"/>
<path d="M856 126 Q848 160 866 190" stroke="#f0ece0" stroke-width="1.8" fill="none"/>
<!-- left leg lower columns -->
<rect x="168" y="515" width="6" height="230" fill="#8e6a5e"/>
<path d="M174 515 L236 515 L236 877 L215 877 L215 799 L174 744 Z" fill="#ccbcbc"/>
<rect x="231" y="560" width="6" height="317" fill="#c9917c"/>
<rect x="237" y="560" width="11" height="317" fill="url(#brownV)"/>
<rect x="247" y="562" width="56" height="195" fill="#ccbebe"/>
<rect x="302" y="562" width="10" height="190" fill="#f4f2f2"/>
<!-- left leg upper white -->
<path d="M149 50 Q150 46 156 46 L236 42 Q242 44 243 60 L243 567 L236 566 L153 521 L149 520 Z" fill="url(#legL)"/>
<path d="M242 44 L324 51 Q342 56 348 72 Q350 78 350 90 L350 370 C350 430 338 515 312 567 L242 567 Z" fill="#f3f1f2"/>
<path d="M243 48 Q247 120 240 566" stroke="#0c0c0c" stroke-width="4" fill="none"/>
<rect x="148" y="50" width="5" height="470" fill="#a88478"/>
<!-- left shadow ellipse + ball -->
<ellipse cx="206" cy="181" rx="34" ry="48" transform="rotate(10 206 181)" fill="#bf9585"/>
<circle cx="213" cy="110" r="38.5" fill="url(#ballG)"/>
<path d="M175 106 Q212 98 251 112" stroke="#f0ece0" stroke-width="2.4" fill="none"/>
<path d="M178 126 Q210 150 250 128" stroke="#e8e0c8" stroke-width="1.6" fill="none" opacity="0.7"/>
<!-- beam -->
<path d="M350 67 L436 37 Q461 28 493 33 L518 42 Q537 48 563 41 L588 41 Q606 45 627 65 L678 89 L703 97 Q722 104 728 135 Q733 190 724 250 L352 237 Z" fill="url(#beamG)"/>
<path d="M350 70 Q360 150 352 237" stroke="#111" stroke-width="3" fill="none"/>

<path d="M729 200 Q728 235 716 252 L700 252 L700 310 L733 310 L733 200 Z" fill="#9c6c5a"/>
<path d="M703 97 Q733 135 729 200 Q727 235 716 252" stroke="#c9c2c2" stroke-width="2.2" fill="none"/>
<path d="M706 99 Q738 135 734 200 L734 250" stroke="#e4e0e0" stroke-width="5" fill="none" opacity="0.8"/>
<circle cx="478" cy="59" r="10" fill="#555"/><circle cx="581" cy="69" r="10" fill="#555"/>
<ellipse cx="376" cy="188" rx="3.5" ry="5" fill="#fafafa" stroke="#3a3a3a" stroke-width="1.2"/><ellipse cx="706" cy="208" rx="3.5" ry="5" fill="#fafafa" stroke="#3a3a3a" stroke-width="1.2"/>
<!-- wheel -->
<path d="M118 765 Q118 746 146 746 Q174 746 176 765 L176 877 L118 877 Z" fill="url(#wheelG)"/>
<path d="M177 783 L194 777 L216 799 Q213 840 215 877 L177 877 Z" fill="#f2f2f2"/>
<path d="M177 782.6 L194 777 L216 800 L190 789.5 L177 790 Z" fill="#0c0a0a"/>
<path d="M177 790 L190 789.5 L191 877 L177 877 Z" fill="url(#grayL)"/>
<!-- mechanism -->
<rect x="246" y="750" width="85" height="127" fill="#d2c2c2"/>
<rect x="251" y="750" width="50" height="5" fill="#151515"/>
<path d="M300 732 L330 748 L330 756 L300 756 Z" fill="#6a6a6a"/>
<rect x="251" y="755" width="80" height="4" fill="#ececec"/>
<g fill="#e8e0e0" stroke="#7a6a6a" stroke-width="1"><circle cx="259.3" cy="765" r="3"/><circle cx="276" cy="764.2" r="3"/><circle cx="308.5" cy="762.7" r="3"/><circle cx="324.4" cy="761.2" r="3"/></g>
<rect x="264" y="776" width="12" height="101" rx="6" fill="#b8a0a0" stroke="#5a4a4a" stroke-width="1"/>
<rect x="265" y="840" width="10" height="37" fill="#1a1414"/>
<circle cx="270" cy="782.4" r="6" fill="#9a7a6a"/><circle cx="270" cy="782.4" r="2" fill="#111"/>
<rect x="276" y="757" width="30" height="120" fill="#0a0a0a"/>
<path d="M268 786 L278 786 L306 876 L294 877 Z" fill="#c8b0b0"/>
<rect x="305" y="770" width="15" height="107" rx="7" fill="#151515" stroke="#8a7a7a" stroke-width="1"/>
<circle cx="313.5" cy="778" r="5" fill="#d8d8d8"/>
<rect x="308" y="819" width="4" height="20" fill="#e8e8e8"/>
<!-- tracks -->
<path d="M318 740 Q334 742 340 760 Q348 800 349 877 L328 877 Q326 800 322 760 Z" fill="url(#trackG)"/>
<g fill="#2a1e1a"><path d="M320 744 L334 745 L336 750 L321 750 Z"/><path d="M322 757 L339 758 L341 764 L323 763 Z"/><path d="M324 771 L342 772 L343 778 L325 777 Z"/><path d="M325 788 L345 789 L346 795 L326 794 Z"/><path d="M326 806 L347 807 L347 813 L327 812 Z"/><path d="M327 825 L348 826 L348 832 L327 831 Z"/><path d="M327 843 L348 844 L349 850 L327 849 Z"/><path d="M328 864 L349 865 L349 871 L328 870 Z"/></g>
<!-- green wireframe -->
<g stroke="#22e022" stroke-width="1.1" fill="none" opacity="0.95">

<path d="M150 52 L150 520 M153 47 L236 42 M243 45 L326 51 L348 70 M350 88 L350 370 C350 430 338 515 312 567"/>
<path d="M160 78 L230 72 M165 85 L260 80 M158 90 L210 70 M250 66 L330 76 M250 80 L330 90"/>
<path d="M154 516 L224 233 M207 574 L229.5 316 M246 565 L302 333 M258 566 L330 350 M320 450 L327 470 M330 500 L345 490"/>
<path d="M153 520 L173 540 L212 568 L240 567 M176 530 L220 560 L250 570 M210 575 L250 580"/>
<path d="M150 520 L160 877 M155 520 L175 877 M168 522 L182 877 M230 565 L232 877 M239 565 L240 877 M243 565 L246 877"/>
<path d="M312 567 L300 760 M305 580 L250 877 M300 640 L270 877"/>
<path d="M118 748 L118 877 M176 748 L178 877 M118 748 L176 746 M322 732 Q348 770 350 877"/>
<path d="M268 786 L306 876 M278 790 L300 877 M284 760 L270 877 M296 765 L278 877 M290 770 L315 877 M300 780 L282 877 M276 800 L310 877 M304 790 L286 877 M311 778 L296 877 M288 760 L308 790 M286 765 L310 760"/>
<path d="M352 67 L436 37 Q461 28 493 33 L518 42 M563 41 L588 41 Q606 45 627 65 L678 89 L703 97"/>
<path d="M360 71 L447 66 M360 73 L690 105 M362 76 L686 103 M362 80 L690 110 M362 86 L686 108 M362 91.5 L686 108 M362 117 L689 119 M362 117 L692 141.5 M365 146 L692 141.5 M365 146 L698 191 M362 179 L698 193 M362 181 L619 200 M362 184 L640 205 M356 211 L698 217 M353 223 L665 228 M353 232 L707 241 M356 226 L700 236 M353 236 L720 249 M380 95 L660 100 M400 130 L680 150 M692 129 L722 175 M692 140 L722 135 M692 192 L722 190"/>
<path d="M352 230 L640 236 M400 234 L700 244 M360 228 L600 232" stroke-opacity="0.8"/>
<path d="M472 36 L535 90 L592 48 M500 35 L508 90"/>
<path d="M710 95 L870 110 M715 120 L760 110 M752 150 L820 140 M760 200 L800 170 M760 300 L820 230 M828 110 L830 308 M840 180 L880 150 M835 230 L860 308 M884 150 L884 308"/>

<path d="M371.6 123.8 L663.8 135.2 M357.4 157.7 L686.4 176.2 M357.7 78.0 L664.7 94.1 M359.0 139.9 L671.6 169.0 M369.9 172.4 L680.6 206.1 M376.6 228.2 L675.1 242.2 M363.4 95.1 L702.4 104.2 M371.3 100.9 L679.4 121.9 M357.4 159.6 L670.7 170.6 M363.5 180.9 L690.4 202.0 M375.1 144.5 L696.3 160.6 M368.6 111.1 L705.5 132.4 M379.5 188.7 L666.1 206.7 M359.6 138.9 L685.4 166.2 M374.3 78.3 L689.8 100.3 M372.7 212.1 L690.9 231.9 M376.2 164.8 L709.1 185.8 M357.5 147.9 L696.5 173.3 M375.7 175.5 L674.8 210.5 M356.5 133.7 L684.0 158.5 M357.4 98.9 L699.9 108.2 M365.4 92.7 L705.3 104.9 M369.2 84.9 L705.9 101.8 M362.7 203.1 L681.6 236.2 M379.0 129.4 L667.8 159.4 M361.6 100.2 L685.2 112.4 M353.0 68.6 L452.0 33.0 M354.0 69.2 L452.0 35.0 M355.0 69.8 L452.0 37.0 M356.5 70.7 L452.0 40.0 M658.9 87.0 L512.6 70.1 M641.9 77.6 L485.0 87.0 M695.3 107.0 L506.3 85.5 M661.8 88.6 L474.1 71.6 M690.0 104.1 L492.0 96.2 M679.8 98.5 L520.5 82.0 M153.1 52.9 L230.7 57.0 M158.1 57.8 L230.5 54.4 M153.8 48.0 L233.6 44.4 M163.1 49.2 L231.5 57.2 M158.6 59.9 L231.2 59.4 M160.4 87.9 L234.8 97.8 M158.2 52.0 L232.6 47.7 M152.4 87.0 L239.5 83.5 M255.6 76.4 L320.7 79.1 M260.1 76.4 L338.1 94.0 M250.3 63.1 L340.1 69.7 M252.6 76.6 L325.8 90.7 M259.9 90.6 L341.0 108.3 M251.2 90.9 L333.5 104.2 M248.4 67.8 L327.3 68.3 M152 50 L154 520 M155 48 L157 519 M158 60 L160 518 M757.7 104.4 L830.3 118.7 M757.7 137.0 L822.8 161.6 M718.2 102.6 L808.4 100.5 M751.7 122.0 L833.2 143.5 M712.4 123.3 L849.5 141.3 M747.0 135.7 L833.0 153.0 M725.3 100.6 L862.1 118.2 M728.9 138.6 L875.2 142.5 M735 308 L818 195 M760 200 L822 180 M830 112 L884 140 M832 120 L868 128 M884 130 L886 308 M880 190 L882 308" stroke-opacity="0.9"/>
</g>
<!-- gizmos -->
<g fill="#cdcdcd" stroke="#8a8a8a" stroke-width="0.6"><polygon points="257.8,781 252.5,791.5 263,791.5"/><polygon points="239.6,814 244.8,803.6 250,814"/><polygon points="265,814 270.5,803.6 276,814"/><polygon points="298.7,779 293.5,789.5 304,789.5"/><polygon points="280.5,812 285.7,801.6 291,812"/><polygon points="306,812 311.3,801.6 316.5,812"/></g>
<circle cx="257.8" cy="802.8" r="9" fill="none" stroke="#2a9a96" stroke-width="4.5"/><path d="M257.8 802.8 L257.8 792 M257.8 802.8 L248.5 808 M257.8 802.8 L267 808" stroke="#cdcdcd" stroke-width="2"/><circle cx="257.8" cy="802.8" r="3.5" fill="#e0e0e0" stroke="#999" stroke-width="0.6"/>
<circle cx="298.7" cy="800.6" r="9" fill="none" stroke="#2a9a96" stroke-width="4.5"/><path d="M298.7 800.6 L298.7 790 M298.7 800.6 L289.5 806 M298.7 800.6 L308 806" stroke="#cdcdcd" stroke-width="2"/><circle cx="298.7" cy="800.6" r="3.5" fill="#e0e0e0" stroke="#999" stroke-width="0.6"/>
<rect x="231.3" y="844.5" width="37" height="8.3" rx="3" fill="#2a9a96"/>
<rect x="245" y="829" width="10" height="37" rx="3" fill="#cdcdcd" stroke="#8a8a8a" stroke-width="0.6"/>
<polygon points="256,829 268.4,834.5 256,840" fill="#cdcdcd"/><polygon points="242.7,855 230.6,860.3 242.7,865.7" fill="#cdcdcd"/>
<g stroke="#d0d0d0" stroke-width="2" fill="none"><path d="M256 848 L315 845 M286.6 846 L276 837 M286.6 846 L277 858 M254 853 L290 877 M276 870 L300 877"/></g>
<circle cx="315.3" cy="849" r="9.5" fill="none" stroke="#2a9a96" stroke-width="5"/><line x1="322" y1="842" x2="331" y2="833" stroke="#cdcdcd" stroke-width="3"/><circle cx="333.5" cy="830.8" r="6.8" fill="#cdcdcd"/>
<circle cx="268" cy="879" r="6" fill="#cdcdcd"/><circle cx="309" cy="878" r="6" fill="#cdcdcd"/>
<circle cx="114" cy="874" r="9" fill="none" stroke="#2a9a96" stroke-width="5"/><line x1="120" y1="868" x2="129" y2="860" stroke="#ccc" stroke-width="3"/><circle cx="131" cy="858" r="6" fill="#ccc"/>
<!-- beam gizmo -->
<rect x="507.5" y="148.5" width="38" height="36" rx="9" fill="#c4c4c4" stroke="#8a8a8a" stroke-width="1"/>
<circle cx="539.9" cy="152.5" r="5.4" fill="#c8c8c8" stroke="#8a8a8a" stroke-width="0.8"/>
<path d="M511 176 Q512 183 520 184 L524 180 Z" fill="#2a9a96"/>
<circle cx="526.6" cy="166.2" r="9.6" fill="#e8e8e8"/>
<path d="M517.5 164 Q518 157 526.6 156.6 Q535 157 535.6 164 Z" fill="#2a9a96"/>
<path d="M519.5 171 L526.6 163.5 L533.7 171" stroke="#cfcfcf" stroke-width="2.6" fill="none"/>
<rect x="525.3" y="168" width="2.6" height="7" fill="#bdbdbd"/>
<circle cx="526.6" cy="166.2" r="12" fill="none" stroke="#1e6048" stroke-width="5"/>
<rect x="507.5" y="190" width="38" height="32.3" rx="9" fill="#c4c4c4" stroke="#8a8a8a" stroke-width="1"/>
<rect x="515.4" y="199" width="21.2" height="15" rx="1.5" fill="#e6cfc6" stroke="#8a8a8a" stroke-width="0.8"/>
<rect x="518.7" y="202.3" width="15.3" height="8.4" fill="#2a9a96"/>
<rect x="524.6" y="213" width="3.6" height="9.6" fill="#d8b8aa"/>
<path d="M515 178 L526.2 186.5 L537.4 178 M526.2 186.5 L526.2 203" stroke="#8a8a8a" stroke-width="3.2" fill="none"/>
<path d="M515 178 L526.2 186.5 L537.4 178 M526.2 186.5 L526.2 203" stroke="#cdcdcd" stroke-width="1.8" fill="none"/>
<!-- floor gizmo -->
<circle cx="538" cy="799.4" r="7.8" fill="#c8c8c8" stroke="#8a8a8a" stroke-width="0.8"/>
<rect x="507.6" y="805.8" width="38.1" height="31.7" rx="7" fill="#c8c8c8" stroke="#8a8a8a" stroke-width="1"/>
<circle cx="526.7" cy="822.6" r="9.4" fill="#d8a888"/>
<rect x="518.9" y="817.5" width="14.9" height="8.4" fill="#22a08e" stroke="#8a8a8a" stroke-width="0.6"/>
<circle cx="526.7" cy="822.6" r="12" fill="none" stroke="#1e6448" stroke-width="5"/>
<!-- grey link lines -->
<g stroke="#6a6a6a" stroke-width="4.2" stroke-linecap="round" fill="none">
<line x1="488" y1="231" x2="165.5" y2="793"/>
<line x1="500.7" y1="231" x2="279" y2="775"/><line x1="498.8" y1="231" x2="286.5" y2="814"/>
<line x1="526.5" y1="231" x2="526.5" y2="756"/>
<line x1="551.2" y1="233.7" x2="640" y2="489"/><line x1="552.5" y1="233.7" x2="640" y2="466.5"/><line x1="557.5" y1="233.7" x2="640" y2="420"/>
<path d="M329 488 L334 500 L348 497"/><path d="M386.7 482 L393 496 L404.6 490"/><path d="M390.7 503 L396.7 517 L410.6 509"/>
<path d="M516 477 L526.5 488 L537 477"/><path d="M516 483 L526.5 494 L537 483"/>
</g>
<g stroke="#c4c4c4" stroke-width="2.6" stroke-linecap="round" fill="none">
<line x1="488" y1="231" x2="165.5" y2="793"/>
<line x1="500.7" y1="231" x2="279" y2="775"/><line x1="498.8" y1="231" x2="286.5" y2="814"/>
<line x1="526.5" y1="231" x2="526.5" y2="756"/>
<line x1="551.2" y1="233.7" x2="640" y2="489"/><line x1="552.5" y1="233.7" x2="640" y2="466.5"/><line x1="557.5" y1="233.7" x2="640" y2="420"/>
<path d="M329 488 L334 500 L348 497"/><path d="M386.7 482 L393 496 L404.6 490"/><path d="M390.7 503 L396.7 517 L410.6 509"/>
<path d="M516 477 L526.5 488 L537 477"/><path d="M516 483 L526.5 494 L537 483"/>
</g>

</svg>

<!-- bottom panel -->
<div class="a" style="left:0;top:877px;width:1255px;height:206px;background:#202124"></div>
<div class="a" style="left:0;top:877px;width:1255px;height:4px;background:#3a3a3a"></div>
<div class="a" style="left:0;top:908px;width:1255px;height:9px;background:#474747"></div>
<div class="a" style="left:0;top:943px;width:1255px;height:6px;background:#474747"></div>
<div class="t" style="left:-1px;top:925px;font-size:13px;letter-spacing:0.15px;color:#b0b0b0">/Isaac/Robots/Fraunhofer/Evobot/</div>
<!-- thumbnails -->
<svg class="a" style="left:0;top:960px" width="64" height="64">
<path d="M1 15 L2 13.5 L20 12 L23 14.5 L54 11.5 L55 13 L55 46 L4 58 Z" fill="#7e7e7e"/>
<path d="M4.5 21.5 L53 14.5 L54 17 L5 24 Z" fill="#e0e0e0"/>
<path d="M4 22 L8.6 29.5 L8.6 60 L4 58 Z" fill="#d8d8d8"/>
<path d="M8.6 29.5 L26 25.5 L28 23.5 L60 17.8 L59 48.3 L8.6 60 Z" fill="#a2a2a2"/>
<path d="M8.6 60 L59 48.3 L59 49.5 L9 61 Z" fill="#555"/>
</svg>
<div class="t" style="left:-1px;top:1035px;font-size:13px;color:#a8a8a8">onfiguratio</div>
<div class="t" style="left:23px;top:1051px;font-size:13px;color:#a8a8a8">n</div>
<div class="a" style="left:79px;top:956px;width:76px;height:116px;background:#718486;border:1px solid #5e6e70"></div>
<div class="a" style="left:80px;top:957px;width:74px;height:74px;background:linear-gradient(160deg,#38383c 0%,#2a2a2e 50%,#1e1e22 100%)"></div>
<svg class="a" style="left:80px;top:957px" width="74" height="74">
<path d="M50 50 L64 43 L74 44 L74 60 L60 62 L52 58 Z" fill="#141416" opacity="0.8"/>
<path d="M25 52 Q27 60 26 68 L30 68 Q30 60 29 52 Z" fill="#77777c" opacity="0.55"/><path d="M41 62 Q44 66 43 73 L47 73 Q47 66 45 62 Z" fill="#77777c" opacity="0.55"/>
<path d="M22 16 Q23 13.5 27 14.5 L53 24 Q55.5 25 55 29 L53.5 33 L33 24 L22 21 Z" fill="#eeeeee"/>
<path d="M22 17 L33 19 L33 42 L23 42 Z" fill="#e8e8e8"/><path d="M22 17 L25 18 L25 42 L23 42 Z" fill="#bdbdbd"/>
<path d="M42 29 L53 31 L53 47 L43 47 Z" fill="#ececec"/>
<rect x="24" y="39" width="9" height="6" fill="#505056"/><ellipse cx="28" cy="45" rx="5.5" ry="4" fill="#26262a"/>
<rect x="43" y="46" width="10" height="7" fill="#505056"/><ellipse cx="47" cy="55" rx="6.5" ry="5" fill="#26262a"/>
<circle cx="21.5" cy="20.5" r="1.6" fill="#d8c070"/><circle cx="54" cy="27.5" r="1.6" fill="#d8c070"/><circle cx="44.5" cy="32" r="1.6" fill="#d8c070"/>
</svg>
<div class="t" style="left:86px;top:1035px;font-size:12.5px;color:#1e2224">evobot.usd</div>
<svg class="a" style="left:180px;top:960px" width="56" height="72"><defs><linearGradient id="qsG" x1="0" y1="0" x2="1" y2="0"><stop offset="0" stop-color="#707070"/><stop offset="1" stop-color="#cfcfcf"/></linearGradient></defs>
<ellipse cx="27.3" cy="65.7" rx="16" ry="2.4" fill="#151517"/>
<path d="M8.9 11.7 L22.6 6.2 Q28 4.6 32.8 4.8 Q38 5.5 41 8.9 Q46 13 47.2 17.1 Q48.5 21 47.8 24 Q46.5 27.5 44.4 30.1 L38.3 36.3 L34.2 39.7 L33.5 50 L20.5 50 L20.5 36.3 Q21 32.5 23.2 30.8 L29.4 26 L34.2 22.6 Q36 20.5 35.5 18.5 Q34.8 16.5 33.5 16.5 Q30 16.5 27.3 17.8 L19.8 24 Z" fill="#d6d6d6"/>
<path d="M8.9 11.7 L19.8 24 L17 20 Z" fill="#999"/><path d="M8.9 11.7 L13 16.5 L19.8 24 L22 21.5 L12.5 11 Z" fill="#a8a8a8"/>
<path d="M20.5 36.3 Q21 32.5 23.2 30.8 L25.5 29.5 Q25 33 25 37 L25 50 L20.5 50 Z" fill="url(#qsG)"/>
<path d="M33.5 16.5 Q36 17 36.5 19.5 L35.5 22 Q35 19 33.5 16.5 Z" fill="#aaa"/>
<path d="M20.5 52.7 L34.2 52 L34.2 61.6 L25.3 63.6 L20.5 60.9 Z" fill="#d0d0d0"/><path d="M20.5 52.7 L25.3 55 L25.3 63.6 L20.5 60.9 Z" fill="#909090"/>
</svg>
<div class="t" style="left:173px;top:1036px;font-size:12px;color:#a8a8a8">LICENSE.txt</div>
<svg class="a" style="left:270px;top:960px" width="56" height="72"><defs><linearGradient id="qsG2" x1="0" y1="0" x2="1" y2="0"><stop offset="0" stop-color="#707070"/><stop offset="1" stop-color="#cfcfcf"/></linearGradient></defs>
<ellipse cx="27.3" cy="65.7" rx="16" ry="2.4" fill="#151517"/>
<path d="M8.9 11.7 L22.6 6.2 Q28 4.6 32.8 4.8 Q38 5.5 41 8.9 Q46 13 47.2 17.1 Q48.5 21 47.8 24 Q46.5 27.5 44.4 30.1 L38.3 36.3 L34.2 39.7 L33.5 50 L20.5 50 L20.5 36.3 Q21 32.5 23.2 30.8 L29.4 26 L34.2 22.6 Q36 20.5 35.5 18.5 Q34.8 16.5 33.5 16.5 Q30 16.5 27.3 17.8 L19.8 24 Z" fill="#d6d6d6"/>
<path d="M8.9 11.7 L19.8 24 L17 20 Z" fill="#999"/><path d="M8.9 11.7 L13 16.5 L19.8 24 L22 21.5 L12.5 11 Z" fill="#a8a8a8"/>
<path d="M20.5 36.3 Q21 32.5 23.2 30.8 L25.5 29.5 Q25 33 25 37 L25 50 L20.5 50 Z" fill="url(#qsG2)"/>
<path d="M33.5 16.5 Q36 17 36.5 19.5 L35.5 22 Q35 19 33.5 16.5 Z" fill="#aaa"/>
<path d="M20.5 52.7 L34.2 52 L34.2 61.6 L25.3 63.6 L20.5 60.9 Z" fill="#d0d0d0"/><path d="M20.5 52.7 L25.3 55 L25.3 63.6 L20.5 60.9 Z" fill="#909090"/>
</svg>
<div class="t" style="left:262px;top:1036px;font-size:12px;color:#a8a8a8">README.md</div>
<!-- right props panel -->
<div class="a" style="left:1044px;top:949px;width:2px;height:134px;background:#393939"></div>
<div class="a" style="left:1046px;top:949px;width:209px;height:134px;background:#242527"></div>
<div class="a" style="left:1050px;top:949px;width:205px;height:103px;background:#303030;border-radius:0 0 0 3px"></div>
<div class="a" style="left:1050px;top:980px;width:205px;height:2px;background:#3c3c3c"></div>
<div class="t" style="left:1053px;top:1017px;font-size:13px;color:#a6a6a6">Modified by</div>
<div class="t" style="left:1053px;top:1033px;font-size:13px;color:#a6a6a6">File size</div>
<div class="a" style="left:1050px;top:1056px;width:205px;height:27px;background:#333333;border-radius:3px 0 0 0"></div>
<svg class="a" style="left:1058px;top:1066px" width="10" height="6"><polygon points="1,0.5 9,0.5 5,5.5" fill="#9a9a9a"/></svg>
<svg class="a" style="left:1072px;top:1057px" width="18" height="22"><path d="M1 1 L12 1 L17 6 L17 21 L1 21 Z" fill="#eeeeee"/><path d="M12 1 L12 6 L17 6" fill="#bbb"/></svg>
<div class="t" style="left:1095px;top:1062px;font-size:13px;color:#cfcfcf">File Information</div>

<!-- FPS overlay -->
<div class="a" style="left:1063px;top:7px;width:200px;height:68px;background:#1f2124;border-radius:4px"></div>
<div class="t" style="left:1165px;top:16px;font-size:12.3px;color:#d6d6d6">FPS: 62.28 | Frame</div>
<div class="t" style="left:1074px;top:36px;font-size:12.3px;color:#d6d6d6">Process Memory: 11.1 GiB used, 20 GiB</div>

<!-- Asset Transformer window -->
<div class="a" style="left:638px;top:308px;width:600px;height:710px;background:#454545;border-radius:3px"></div>
<div class="a" style="left:638px;top:308px;width:600px;height:24px;background:#202124;border-radius:3px 3px 0 0"></div>
<svg class="a" style="left:648px;top:314px" width="14" height="12"><polygon points="1,1 13,1 7,11" fill="#d4d4d4"/></svg>
<div class="t" style="left:884px;top:314px;font-size:13px;color:#d6d6d6">Asset Transformer</div>
<svg class="a" style="left:1214px;top:312px" width="16" height="16"><path d="M2 2 L14 14 M14 2 L2 14" stroke="#dcdcdc" stroke-width="1.6"/></svg>
<!-- scrollbar -->
<div class="a" style="left:1225px;top:339px;width:6px;height:521px;background:#9d9d9d;border-radius:3px"></div>

<!-- frame 1 -->
<div class="a" style="left:654px;top:342px;width:562px;height:212px;background:#343434;border-radius:2px"></div>
<div class="a" style="left:654px;top:342px;width:562px;height:24px;background:#2b2b2b;border-radius:2px 2px 0 0"></div>
<svg class="a" style="left:668px;top:347px" width="14" height="13"><polygon points="1,1 13,1 7,12" fill="#d6d6d6"/></svg>
<div class="t" style="left:693px;top:348px;font-size:13px;font-weight:bold;letter-spacing:0.35px;color:#d8d8d8">Choose Input File</div>
<svg class="a" style="left:1186px;top:344px" width="24" height="18"><polygon points="1,7 11,3 21,7 11,11" fill="#1e8bd6"/><path d="M5 9 L5 13 Q11 16 17 13 L17 9 L11 12 Z" fill="#1e8bd6"/><path d="M3 8 L3 15" stroke="#1e8bd6" stroke-width="1"/></svg>
<svg class="a" style="left:666px;top:374px" width="22" height="22"><circle cx="11" cy="11" r="9" fill="none" stroke="#1e90e0" stroke-width="1.8"/><rect x="10" y="9.5" width="2.2" height="7" fill="#1e90e0"/><circle cx="11.1" cy="6.5" r="1.3" fill="#1e90e0"/></svg>
<div class="t" style="left:693px;top:377px;font-size:13px;letter-spacing:0.4px;color:#bdbdbd">Choose between transforming the active file in the Stage or choose an input file</div>
<div class="t" style="left:693px;top:393px;font-size:13px;letter-spacing:0.4px;color:#bdbdbd">from disk.</div>
<div class="t" style="left:667px;top:415px;font-size:13px;font-weight:bold;color:#d8d8d8">File</div>
<svg class="a" style="left:672px;top:440px" width="16" height="16"><circle cx="8" cy="8" r="6.6" fill="none" stroke="#c4c4c4" stroke-width="1.6"/><circle cx="8" cy="8" r="4.2" fill="#a8a8a8"/></svg>
<div class="t" style="left:690px;top:441px;font-size:13px;color:#d0d0d0">Active Stage</div>
<svg class="a" style="left:953px;top:440px" width="16" height="16"><circle cx="8" cy="8" r="6.5" fill="none" stroke="#c8c8c8" stroke-width="1.3"/></svg>
<div class="t" style="left:971px;top:442px;font-size:12px;color:#d0d0d0">Pick File</div>
<div class="t" style="left:667px;top:468px;font-size:13px;color:#b5b5b5">Stage</div>
<div class="a" style="left:844px;top:463px;width:359px;height:23px;background:#202124;border-radius:2px"></div>
<div class="a" style="left:873px;top:465px;width:262px;height:19px;background:#484a4f"></div>
<div class="t" style="left:845px;top:468px;font-size:13px;color:#e2e2e2">.com/Isaac/Robots/Fraunhofer/Evobot/evobot.usd</div>
<div class="a" style="left:873px;top:466px;width:1px;height:17px;background:#d0d0d0"></div>
<div class="t" style="left:667px;top:496px;font-size:13px;letter-spacing:0.75px;color:#b8b8b8">Output Directory</div>
<div class="a" style="left:844px;top:491px;width:333px;height:23px;background:#202124;border-radius:2px"></div>
<div class="t" style="left:851px;top:496px;font-size:13px;letter-spacing:0.18px;color:#e2e2e2">/tmp/my_robot_transformed</div>
<svg class="a" style="left:1179px;top:493px" width="22" height="19"><path d="M1 3 Q1 1 3 1 L8 1 L10 3.5 L19 3.5 Q21 3.5 21 5.5 L21 16 Q21 18 19 18 L3 18 Q1 18 1 16 Z" fill="#8a8a8a"/></svg>
<div class="t" style="left:667px;top:520px;font-size:13px;letter-spacing:0.35px;color:#b5b5b5">Load Restructured File</div>
<div class="a" style="left:844px;top:519px;width:16px;height:16px;background:#cfcfcf;border-radius:3px"></div>
<svg class="a" style="left:844px;top:519px" width="16" height="16"><path d="M3.5 8.5 L6.5 11.5 L12.5 4.5" fill="none" stroke="#2a2a2a" stroke-width="2.6"/></svg>

<!-- frame 2 -->
<div class="a" style="left:654px;top:559px;width:562px;height:455px;background:#343434;border-radius:2px"></div>
<div class="a" style="left:654px;top:559px;width:562px;height:25px;background:#2b2b2b;border-radius:2px 2px 0 0"></div>
<svg class="a" style="left:668px;top:565px" width="14" height="13"><polygon points="1,1 13,1 7,12" fill="#d6d6d6"/></svg>
<div class="t" style="left:693px;top:565px;font-size:13px;font-weight:bold;letter-spacing:0.45px;color:#d8d8d8">Set Actions</div>
<svg class="a" style="left:666px;top:591px" width="22" height="22"><circle cx="11" cy="11" r="9" fill="none" stroke="#1e90e0" stroke-width="1.8"/><rect x="10" y="9.5" width="2.2" height="7" fill="#1e90e0"/><circle cx="11.1" cy="6.5" r="1.3" fill="#1e90e0"/></svg>
<div class="t" style="left:693px;top:594px;font-size:13px;letter-spacing:0.32px;color:#bdbdbd">Actions will define how the USD files are transformed. Actions can be added from</div>
<div class="t" style="left:693px;top:610px;font-size:13px;letter-spacing:0.29px;color:#bdbdbd">presets or individually. When added, an Action can be enabled or disabled with the</div>
<div class="t" style="left:693px;top:626px;font-size:13px;letter-spacing:0.3px;color:#bdbdbd">checkbox. Execution order matter, and the last action should output the file that</div>
<div class="t" style="left:693px;top:641px;font-size:13px;letter-spacing:0.3px;color:#bdbdbd">will be loaded into the Stage.</div>
<div class="a" style="left:670px;top:664px;width:106px;height:23px;background:#262626;border-radius:2px"></div>
<svg class="a" style="left:676px;top:667px" width="20" height="17"><path d="M1 3 Q1 1 3 1 L7 1 L9 3 L16 3 Q18 3 18 5 L18 14 Q18 16 16 16 L3 16 Q1 16 1 14 Z" fill="#b4b4b4"/></svg>
<div class="t" style="left:698px;top:669px;font-size:12.5px;color:#d2d2d2">Load Preset</div>
<div class="a" style="left:786px;top:664px;width:105px;height:23px;background:#262626;border-radius:2px"></div>
<svg class="a" style="left:795px;top:668px" width="14" height="14"><path d="M1 1 L10 1 L13 4 L13 13 L1 13 Z" fill="none" stroke="#c8c8c8" stroke-width="1.3"/><rect x="4" y="1.5" width="5" height="3.5" fill="none" stroke="#c8c8c8" stroke-width="1.1"/><rect x="3.5" y="8" width="7" height="5" fill="none" stroke="#c8c8c8" stroke-width="1.1"/></svg>
<div class="t" style="left:814px;top:669px;font-size:12.5px;color:#d2d2d2">Save Preset</div>
<div class="a" style="left:1069px;top:663px;width:131px;height:24px;background:#383838;border-radius:2px"></div>
<svg class="a" style="left:1078px;top:668px" width="15" height="14"><path d="M2.5 2.5 L12.5 11.5 M12.5 2.5 L2.5 11.5" stroke="#6e3a38" stroke-width="3.2" stroke-linecap="round"/><path d="M2.5 2.5 L12.5 11.5 M12.5 2.5 L2.5 11.5" stroke="#2a2020" stroke-width="0.6"/></svg>
<div class="t" style="left:1097px;top:669px;font-size:12.5px;color:#6c6c6c">Clear All Actions</div>
<div class="a" style="left:667px;top:694px;width:536px;height:22px;background:#2e2e2e;border-radius:2px"></div>
<svg class="a" style="left:676px;top:699px" width="12" height="12"><polygon points="2,1 10,6 2,11" fill="#d0d0d0"/></svg>
<div class="t" style="left:694px;top:699px;font-size:13px;color:#d0d0d0">Profile Settings</div>
<div class="a" style="left:667px;top:720px;width:536px;height:294px;background:#454545"></div>
<!-- resize corner -->
<svg class="a" style="left:1218px;top:998px" width="20" height="20"><path d="M19 2 L19 19 L2 19 L5 16 L16 16 L16 5 Z" fill="#6f7c7e"/></svg>
</body></html>
